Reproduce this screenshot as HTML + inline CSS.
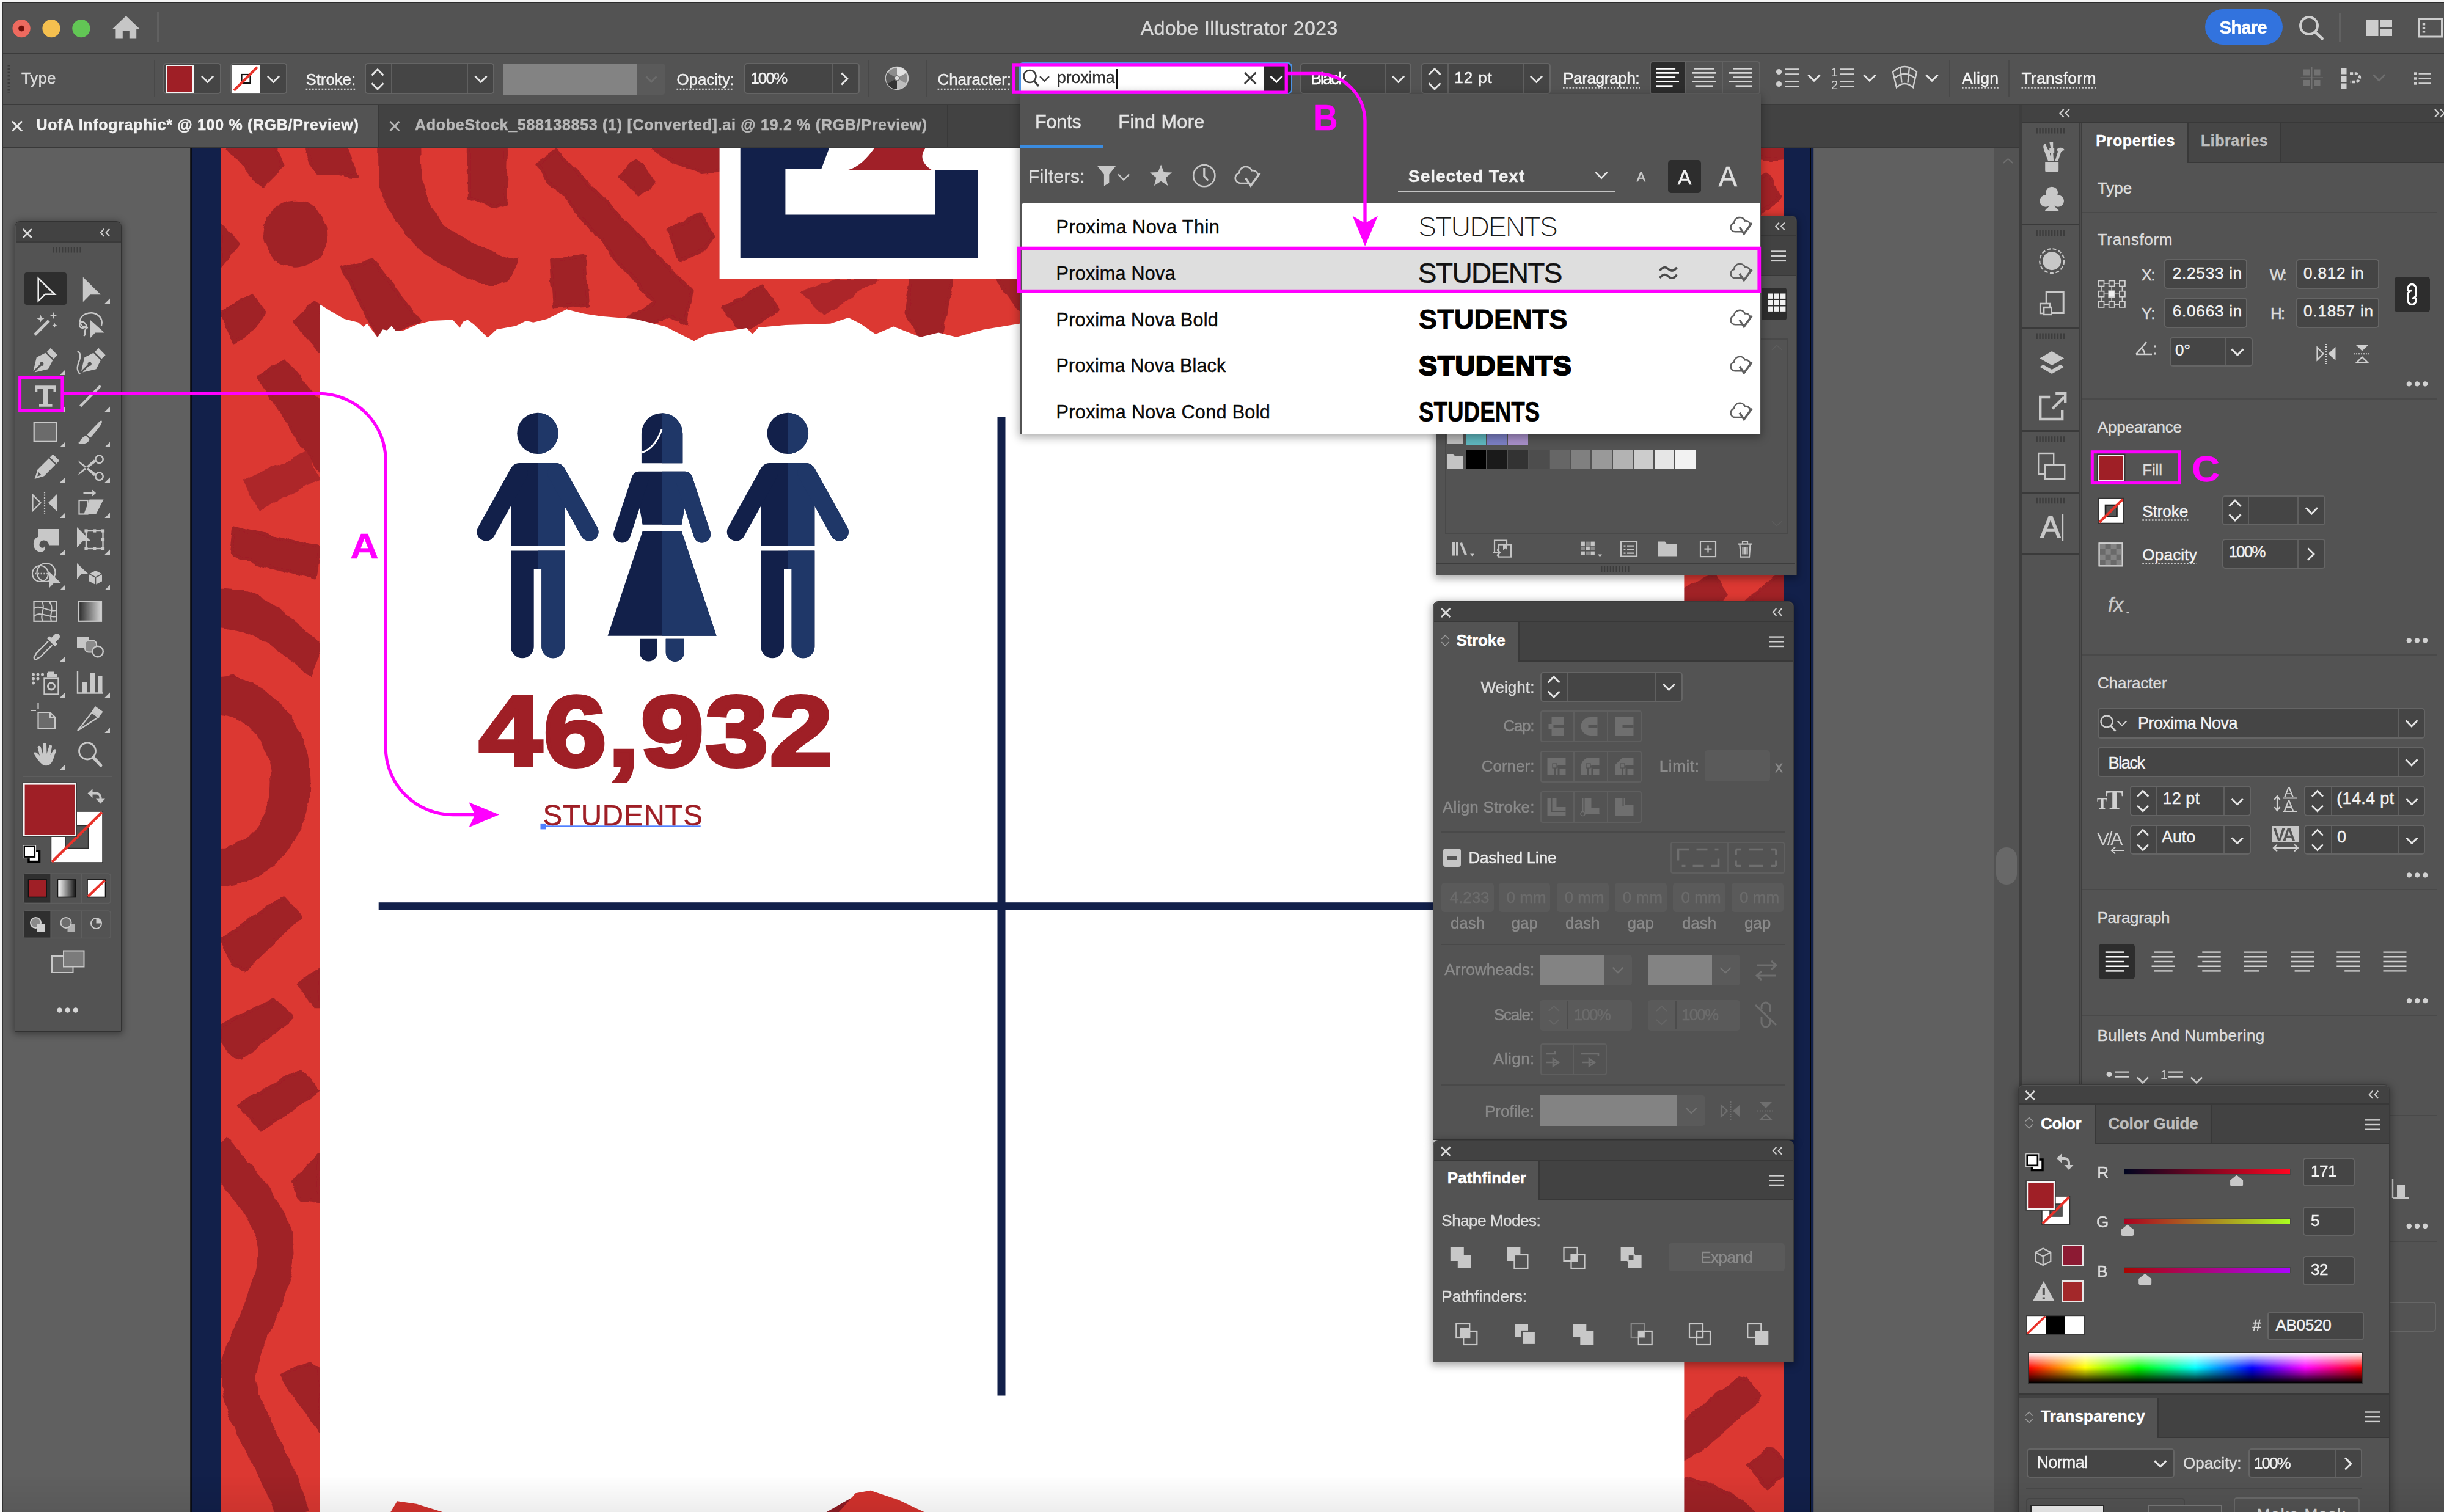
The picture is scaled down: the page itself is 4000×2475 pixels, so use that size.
<!-- g_head -->
<!DOCTYPE html>
<html lang="en"><head><meta charset="utf-8"><title>Adobe Illustrator 2023</title>
<style>
html,body{margin:0;padding:0}
body{width:4000px;height:2475px;overflow:hidden;background:#535353;position:relative;font-family:"Liberation Sans",sans-serif;color:#dcdcdc;font-size:25px;line-height:1}
.a{position:absolute}
.t{position:absolute;white-space:nowrap;line-height:1;-webkit-text-stroke-width:0.45px}
svg{overflow:visible}
</style></head><body>
<!-- g_canvas -->
<div class="a" style="left:0;top:242px;width:3304px;height:2233px;background:#606060;overflow:hidden">
<svg class="a" width="3304" height="2233" viewBox="0 242 3304 2233" style="left:0;top:0">
<defs><clipPath id="rh"><rect x="880" y="600" width="203.6" height="600"/><rect x="1083.600" y="600" width="205.700" height="600" transform="translate(0 0)"/></clipPath>
<clipPath id="rh1"><rect x="880" y="600" width="100" height="600"/></clipPath>
<clipPath id="rh2"><rect x="1083.600" y="600" width="100" height="600"/></clipPath>
<clipPath id="rh3"><rect x="1289.300" y="600" width="100" height="600"/></clipPath>
<filter id="rough" x="-5%" y="-5%" width="110%" height="110%"><feTurbulence type="fractalNoise" baseFrequency="0.035" numOctaves="3" seed="4" result="n"/><feDisplacementMap in="SourceGraphic" in2="n" scale="9" xChannelSelector="R" yChannelSelector="G"/></filter>
<clipPath id="redclip"><rect x="362" y="242" width="2557.500" height="2240"/></clipPath></defs>
<rect x="311.300" y="242" width="2652.700" height="2240" fill="#050505"/>
<rect x="313.700" y="242" width="2648.300" height="2240" fill="#12204a"/>
<rect x="2964" y="242" width="4.200" height="2240" fill="#12204a"/>
<rect x="362" y="242" width="2557.500" height="2240" fill="#dc3832"/>
<g fill="#a02028" clip-path="url(#redclip)"><g filter="url(#rough)"><g stroke="#a02028" stroke-width="5" stroke-linejoin="round">
<polygon points="371.6,242.0 451.8,242.0 463.2,271.5 430.3,304.4 408.8,283.0" />
<polygon points="501.9,242.0 566.4,242.0 583.5,289.3 552.0,284.4 520.5,284.4 509.0,268.6" />
<polygon points="768.3,242.0 828.4,242.0 827.0,334.5 812.7,338.8 768.3,323.0" />
<polygon points="878.0,269.5 910.0,244.9 1131.0,475.7 1123.6,529.7 1096.6,517.4 1040.0,540.0 1010.6,529.7 1069.6,495.3" />
<polygon points="1015.6,286.6 1040.1,262.1 1072.0,296.5 1045.0,321.0" />
<polygon points="1094.1,377.5 1148.1,348.0 1167.8,387.3 1153.0,409.4 1113.8,426.6" />
<polygon points="902.6,426.6 956.6,419.2 961.5,500.2 907.5,502.7" />
<polygon points="560.6,437.6 609.3,426.2 686.6,526.4 617.9,552.2" />
<polygon points="361.9,368.9 390.2,399.0 361.9,434.8" />
<polygon points="1069.6,242.0 1177.6,242.0 1177.6,279.1 1149.1,281.6 1100.0,266.8" />
<polygon points="1185.9,503.7 1247.3,468.1 1273.1,506.2 1230.1,535.6 1208.0,536.9" />
<polygon points="1490.3,457.1 1556.6,457.1 1541.9,546.7 1502.6,551.6 1483.0,512.3" />
<polygon points="1632.7,457.1 1669.6,457.1 1669.6,507.4" />
<polygon points="361.8,512.7 412.0,482.2 432.5,510.6 416.4,536.7 383.7,560.8" />
<polygon points="481.9,528.0 514.6,495.3 523.3,499.6 530.0,582.6" />
<polygon points="422.9,617.5 466.6,589.1 540.0,680.0 540.0,790.0 497.0,733.0" />
<polygon points="383.7,864.1 523.3,896.9 516.8,947.1 431.7,925.2 379.3,907.8" />
<polygon points="361.8,1108.6 381.5,1106.4 440.0,1150.0 361.8,1150.0" />
<polygon points="361.8,1536.5 464.4,1468.8 492.8,1499.4 398.9,1588.9 381.5,1580.2" />
<polygon points="488.4,1610.7 523.3,1584.5 523.3,1647.8 516.8,1647.8" />
<polygon points="361.8,1680.5 449.1,1634.7 479.7,1665.3 394.6,1732.9 381.5,1728.6 361.8,1702.4" />
<polygon points="389.5,1808.8 492.6,1751.6 522.4,1785.9 426.7,1850.0" />
<polygon points="478.3,1932.0 522.4,1889.0 522.4,1966.4 492.6,1963.5" />
<polygon points="461.1,2249.9 506.9,2232.7 522.4,2241.3 530.0,2350.0 492.6,2301.5" />
<polygon points="2756.4,2325.5 2845.5,2254.6 2858.3,2257.3 2880.1,2283.7 2874.6,2294.6 2778.2,2376.4 2756.4,2388.3" />
<polygon points="2860.1,2398.3 2892.8,2371.9 2900.1,2372.8 2919.5,2391.0 2919.5,2412.8 2892.8,2434.7 2887.4,2431.0" />
<polygon points="2756.4,2423.7 2761.8,2420.1 2801.9,2431.0 2838.2,2449.2 2871.0,2475.0 2756.4,2475.0" />
<polygon points="2756.5,965.9 2790.8,945.1 2805.6,940.0 2825.2,974.5 2815.4,984.1 2756.5,990.0" />
<polygon points="2855.9,984.1 2908.7,943.8 2919.5,938.0 2919.5,990.0" />
<polygon points="2870.0,240.0 2925.0,240.0 2925.0,257.0 2900.0,259.5 2870.0,257.0" />
<polygon points="2875.0,293.0 2890.6,285.0 2893.0,287.0 2913.0,322.2 2911.0,325.5 2875.0,352.0" />
</g>
<path d="M619.3 236.0C620.0 248.6 617.1 288.5 623.6 311.6C630.1 334.7 644.1 356.0 658.0 374.6C671.9 393.2 685.2 408.5 706.7 423.3C728.2 438.1 766.4 456.9 786.9 463.4C807.4 469.8 822.6 462.2 829.8 462.0L848.5 423.3C845.9 423.1 847.8 427.6 832.7 421.9C817.7 416.2 777.8 400.6 758.2 388.9C738.6 377.2 726.3 367.0 715.3 351.7C704.3 336.4 696.9 316.6 692.4 297.3C687.9 278.0 688.8 246.2 688.1 236.0Z" />
<path d="M355.0 962.3C363.4 963.4 387.6 962.7 405.5 968.9C423.4 975.1 441.4 984.7 462.2 999.4C482.9 1014.1 518.7 1047.4 530.0 1057.0L508.0 1107.0C498.2 1099.2 467.7 1072.6 449.1 1060.5C430.6 1048.4 412.4 1039.9 396.7 1034.4C381.0 1029.0 361.9 1028.9 355.0 1027.8Z" />
<ellipse cx="483.300" cy="383.200" rx="53" ry="54.500"/>
<polygon points="398.9,785.6 503.7,737.5 523.3,785.6 422.9,835.8" opacity="0.78"/>
<polygon points="1308.7,476.7 1367.6,457.1 1438.8,457.1 1348.0,516.0" opacity="0.8"/>
<ellipse cx="357.500" cy="1279" rx="118" ry="141" fill="none" stroke="#a02028" stroke-width="64"/>
<path d="M350 1880C420 1960 460 2010 450 2070C440 2140 390 2200 390 2255C392 2320 450 2380 478 2480" fill="none" stroke="#a02028" stroke-width="58"/>
</g></g>
<path fill="#fff" d="M524 2480V498.6L543.4 510.6L563.5 522L586.4 527.8L595 535L600.7 529.3L617.9 552.2L626.5 539.3L633.6 540.7L640.8 533.6L648 542L660.9 540.7L683.8 530.7L706.7 525L741 523.5L752.5 536.4L758.2 526.4L765.4 523.5L775.4 530.7L798.3 552.7L812.7 539.3L844.2 533.6L861.3 525L872.8 527.8L895.7 522.1L927.2 506.3L955.8 513.5L984.5 517.8L1040 522.3L1089 534.6L1135.8 558.2L1158 546.9L1221.8 537L1231.6 546.9L1241.4 536L1285.6 532.1L1359 529.7L1388.7 519.9L1408 529.7L1433 546.9L1462.4 534.6L1506.5 551.8L1536 544.4L1565.5 551.8L1609.7 539.5L1668.6 529.7L2756.400 530V2480Z"/>
<path fill="#8f1c24" d="M1351 2476L1394 2451.600L1433 2476Z"/><path fill="#d4322d" d="M638.700 2476L650 2457.200L681.600 2461.800L727.500 2476ZM1372 2476L1394 2451.600L1400 2444.300L1424.700 2439.700L1470 2455L1514.700 2476Z"/>
<rect x="1177.600" y="242" width="1200" height="214.400" fill="#fff"/>
<path fill="#12204a" d="M1211.700 242H1357.300L1344.300 276.600H1285.400V351.500H1530.900V278.600H1600.800V422.700H1211.700Z"/>
<path fill="#a02028" d="M1379.900 279.100Q1405 279 1431.400 242H1514.900Q1500 262 1526 279.100Z"/>
<rect x="619.700" y="1477.200" width="1760" height="12.800" fill="#12204a"/>
<rect x="1632.500" y="682" width="13" height="1602.500" fill="#12204a"/>
<g fill="#12204a" stroke="#12204a" stroke-width="0"><circle cx="880" cy="709.4" r="33.7"/><path d="M836 893V772a14 14 0 0 1 14 -14h60a14 14 0 0 1 14 14V893Z"/><line x1="849" y1="774" x2="795.5" y2="870.5" stroke-width="30" stroke-linecap="round"/><line x1="911" y1="774" x2="964.5" y2="870.5" stroke-width="30" stroke-linecap="round"/><path d="M836 901.5H924V1058.500a18.850 18.850 0 0 1 -37.700 0V931.600H873.7V1058.500a18.850 18.850 0 0 1 -37.700 0Z"/></g>
<g fill="#1f3768" stroke="#1f3768" stroke-width="0" clip-path="url(#rh1)"><circle cx="880" cy="709.4" r="33.7"/><path d="M836 893V772a14 14 0 0 1 14 -14h60a14 14 0 0 1 14 14V893Z"/><line x1="849" y1="774" x2="795.5" y2="870.5" stroke-width="30" stroke-linecap="round"/><line x1="911" y1="774" x2="964.5" y2="870.5" stroke-width="30" stroke-linecap="round"/><path d="M836 901.5H924V1058.500a18.850 18.850 0 0 1 -37.700 0V931.600H873.7V1058.500a18.850 18.850 0 0 1 -37.700 0Z"/></g>
<g fill="#12204a" stroke="#12204a" stroke-width="0"><path d="M1049.8999999999999 758.2V709.900A33.700 33.700 0 0 1 1117.3 709.900V758.200Z"/><path d="M1034.6 783a11.500 11.500 0 0 1 11.500 -11.300h75a11.500 11.500 0 0 1 11.500 11.300L1119.6 836L1115.6 858.700H1051.6L1047.6 836Z"/><line x1="1047.1" y1="786" x2="1018.0999999999999" y2="874.500" stroke-width="28" stroke-linecap="round"/><line x1="1120.1" y1="786" x2="1149.1" y2="874.500" stroke-width="28" stroke-linecap="round"/><path d="M1051.6 869.800H1115.6L1172.6 1040.700H994.5999999999999Z"/><path d="M1047.0 1045.800h29v22.200a14.500 14.500 0 0 1 -29 0Z M1089.6999999999998 1045.800h30v22.200a15 15 0 0 1 -30 0Z"/></g>
<g fill="#1f3768" stroke="#1f3768" stroke-width="0" clip-path="url(#rh2)"><path d="M1049.8999999999999 758.2V709.900A33.700 33.700 0 0 1 1117.3 709.900V758.200Z"/><path d="M1034.6 783a11.500 11.500 0 0 1 11.500 -11.300h75a11.500 11.500 0 0 1 11.500 11.300L1119.6 836L1115.6 858.700H1051.6L1047.6 836Z"/><line x1="1047.1" y1="786" x2="1018.0999999999999" y2="874.500" stroke-width="28" stroke-linecap="round"/><line x1="1120.1" y1="786" x2="1149.1" y2="874.500" stroke-width="28" stroke-linecap="round"/><path d="M1051.6 869.800H1115.6L1172.6 1040.700H994.5999999999999Z"/><path d="M1047.0 1045.800h29v22.200a14.500 14.500 0 0 1 -29 0Z M1089.6999999999998 1045.800h30v22.200a15 15 0 0 1 -30 0Z"/></g>
<g fill="#12204a" stroke="#12204a" stroke-width="0"><circle cx="1289.3" cy="709.4" r="33.7"/><path d="M1245.3 893V772a14 14 0 0 1 14 -14h60a14 14 0 0 1 14 14V893Z"/><line x1="1258.3" y1="774" x2="1204.8" y2="870.5" stroke-width="30" stroke-linecap="round"/><line x1="1320.3" y1="774" x2="1373.8" y2="870.5" stroke-width="30" stroke-linecap="round"/><path d="M1245.3 901.5H1333.3V1058.500a18.850 18.850 0 0 1 -37.700 0V931.600H1283.0V1058.500a18.850 18.850 0 0 1 -37.700 0Z"/></g>
<g fill="#1f3768" stroke="#1f3768" stroke-width="0" clip-path="url(#rh3)"><circle cx="1289.3" cy="709.4" r="33.7"/><path d="M1245.3 893V772a14 14 0 0 1 14 -14h60a14 14 0 0 1 14 14V893Z"/><line x1="1258.3" y1="774" x2="1204.8" y2="870.5" stroke-width="30" stroke-linecap="round"/><line x1="1320.3" y1="774" x2="1373.8" y2="870.5" stroke-width="30" stroke-linecap="round"/><path d="M1245.3 901.5H1333.3V1058.500a18.850 18.850 0 0 1 -37.700 0V931.600H1283.0V1058.500a18.850 18.850 0 0 1 -37.700 0Z"/></g>
<path d="M1050 741Q1072 734 1083 703" fill="none" stroke="#fff" stroke-width="3"/>
<rect x="888" y="1351.300" width="258.700" height="2.600" fill="#4f7fff"/><rect x="884.500" y="1347.900" width="9.400" height="9.500" fill="#4f7fff"/>
</svg>
<div class="t" style="left:783.9px;top:872.9px;font-size:163px;color:#9f1f26;font-weight:bold;-webkit-text-stroke:6px #9f1f26;transform-origin:0 0;transform:scaleX(1.138);letter-spacing:2px;">46,932</div>
<div class="t" style="left:888.5px;top:1068.6px;font-size:47.5px;color:#9f1f26;letter-spacing:0.79px;">STUDENTS</div>
</div>
<!-- g_tools -->
<div class="a" style="left:24.0px;top:361.7px;width:175.0px;height:1327.3px;background:#535353;border-radius:9px 9px 2px 2px;box-shadow:0 2px 12px 2px rgba(0,0,0,.36);border:1.5px solid #323232;box-sizing:border-box;"></div>
<div class="a" style="left:25.5px;top:363.2px;width:172.0px;height:31.8px;background:#424242;border-radius:8px 8px 0 0;"></div>
<div class="a" style="left:25.5px;top:394.5px;width:172.0px;height:2.0px;background:#3a3a3a;"></div>
<div class="a" style="left:40.1px;top:446.0px;width:68.8px;height:52.6px;background:#2e2e2e;border-radius:4px;"></div>
<div class="a" style="left:38.0px;top:1270.5px;width:145.0px;height:1.5px;background:#5e5e5e;"></div>
<svg class="a" style="left:0;top:0;" width="4000" height="2475" viewBox="0 0 4000 2475">
<path d="M37.8 374.9L51.8 388.9M51.8 374.9L37.8 388.9" stroke="#dadada" stroke-width="2.8"/><path d="M170.3 374.8L164.8 380.8L170.3 386.8" fill="none" stroke="#d0d0d0" stroke-width="2"/>
<path d="M179.2 374.8L173.7 380.8L179.2 386.8" fill="none" stroke="#d0d0d0" stroke-width="2"/>
<line x1="86.3" y1="408.7" x2="133.5" y2="408.7" stroke="#3c3c3c" stroke-width="9.5" stroke-dasharray="2.4 2.5"/>
<path d="M62.7 455.5V492.5L73.8 481.8H89.5Z" fill="none" stroke="#ececec" stroke-width="2.6"/><path d="M135.8 453.5V494.3L147.6 482.3H164.8Z" fill="#c8c8c8"/><path d="M180 497h-8.6l8.6 -8.6z" fill="#c8c8c8"/><path d="M57 548L80 525" stroke="#c8c8c8" stroke-width="5"/><path d="M66.5 515.5L68.18 519.82L72.5 521.5L68.18 523.18L66.5 527.5L64.82 523.18L60.5 521.5L64.82 519.82Z" fill="#c8c8c8"/><path d="M87.5 511.0L89.04 514.96L93.0 516.5L89.04 518.04L87.5 522.0L85.96 518.04L82.0 516.5L85.96 514.96Z" fill="#c8c8c8"/><path d="M89.5 528.5L90.62 531.38L93.5 532.5L90.62 533.62L89.5 536.5L88.38 533.62L85.5 532.5L88.38 531.38Z" fill="#c8c8c8"/><path d="M144 536C132 539 124 521 140 514C156 508 170 519 166 533M140 533a5 5 0 1 1 -6 -6c6 0 10 8 6 12c-3 4 2 8 -3 11" fill="none" stroke="#c8c8c8" stroke-width="2.4"/><path d="M148 524V553L156 544.5H171Z" fill="#c8c8c8"/>
<g transform="translate(71.5 592.5) rotate(45)"><path d="M-8 -24h16v9h-16z" fill="#c8c8c8"/><path d="M-8.5 -12.5h17l5 15.5l-12 19.5v-15a3.2 3.2 0 1 0 -3 0v15l-12 -19.5z" fill="#c8c8c8"/></g><path d="M106.5 614h-8.6l8.6 -8.6z" fill="#c8c8c8"/><g transform="translate(150 592.5) rotate(45)"><path d="M-8 -24h16v9h-16z" fill="#c8c8c8"/><path d="M-8.5 -12.5h17l5 15.5l-12 19.5v-15a3.2 3.2 0 1 0 -3 0v15l-12 -19.5z" fill="#c8c8c8"/></g><path d="M127 574.5C140 584.5 118 599.5 131 612.5" fill="none" stroke="#c8c8c8" stroke-width="2.4"/>
<path d="M57.3 631.3H91.3V641H87.5V636H78.4V661.5H85.5V665.7H64V661.5H70.8V636H61.3V641H57.3Z" fill="#c8c8c8"/><path d="M106.5 674h-8.6l8.6 -8.6z" fill="#c8c8c8"/><path d="M131.5 665L164.5 631.5" stroke="#c8c8c8" stroke-width="4"/><path d="M180 674h-8.6l8.6 -8.6z" fill="#c8c8c8"/>
<rect x="55.7" y="691.4" width="36.7" height="31.4" fill="#6b6b6b" stroke="#c8c8c8" stroke-width="2.2"/><path d="M106.5 732h-8.6l8.6 -8.6z" fill="#c8c8c8"/><path d="M166 688.5C169 690 165 698 148 716.5L142.5 711.5C160 693 164 688 166 688.5ZM141 713.5L146.5 718.5C145 727 134 728 128 725C133 723 132 715 141 713.5Z" fill="#c8c8c8"/><path d="M180 732h-8.6l8.6 -8.6z" fill="#c8c8c8"/>
<g transform="translate(75 765.7) rotate(45)"><path d="M-7.5 -24h15v7h-15z M-7.5 -14.5h15v26l-7.500 14.500l-7.500 -14.500z" fill="#c8c8c8"/><path d="M-3.2 13.500h6.400l-3.2 6.200z" fill="#535353"/></g><path d="M106.5 790h-8.6l8.6 -8.6z" fill="#c8c8c8"/><circle cx="162.5" cy="751.7" r="6.200" fill="none" stroke="#c8c8c8" stroke-width="2.6"/><circle cx="162.5" cy="779.7" r="6.200" fill="none" stroke="#c8c8c8" stroke-width="2.6"/><path d="M127.500 753.2L157 775.2L154 779.2L130 757.7Z M127.500 778.2L157 756.2L154 752.2L130 773.7Z" fill="#c8c8c8"/><path d="M180 790h-8.6l8.6 -8.6z" fill="#c8c8c8"/>
<path d="M53.5 810V836L66.5 823Z" fill="none" stroke="#c8c8c8" stroke-width="2.2"/><path d="M93.500 808.5V837.5L79 823Z" fill="#c8c8c8"/><line x1="73" y1="805" x2="73" y2="842" stroke="#c8c8c8" stroke-width="2.2" stroke-dasharray="2.2 2.2"/><path d="M106.5 848h-8.6l8.6 -8.6z" fill="#c8c8c8"/><rect x="129.500" y="819" width="14" height="22.500" fill="none" stroke="#c8c8c8" stroke-width="2.2"/><path d="M146.500 817.5H169.500L157 842H137Z" fill="#c8c8c8"/><path d="M136.500 807H155M150.500 802.5L155.500 807L150.500 811.5" fill="none" stroke="#c8c8c8" stroke-width="2.2"/><path d="M180 848h-8.6l8.6 -8.6z" fill="#c8c8c8"/>
<path d="M62.500 866H96V892.5H80C80 883 66 881 64.500 891C64 897 72 899 73 894C76 901 70 904 65 903.5C52 901 52 881 62.500 879Z" fill="#c8c8c8"/><path d="M106.5 908h-8.6l8.6 -8.6z" fill="#c8c8c8"/><path d="M126 863V896L135.500 886H149Z" fill="#c8c8c8"/><rect x="141" y="869" width="27.500" height="29" fill="none" stroke="#c8c8c8" stroke-width="2.4"/><rect x="138.4" y="866.4" width="5.2" height="5.2" fill="#c8c8c8"/><rect x="152.20000000000002" y="866.4" width="5.2" height="5.2" fill="#c8c8c8"/><rect x="165.9" y="866.4" width="5.2" height="5.2" fill="#c8c8c8"/><rect x="165.9" y="880.9" width="5.2" height="5.2" fill="#c8c8c8"/><rect x="165.9" y="895.4" width="5.2" height="5.2" fill="#c8c8c8"/><rect x="152.20000000000002" y="895.4" width="5.2" height="5.2" fill="#c8c8c8"/><rect x="138.4" y="895.4" width="5.2" height="5.2" fill="#c8c8c8"/><path d="M180 908h-8.6l8.6 -8.6z" fill="#c8c8c8"/>
<circle cx="66" cy="939" r="13" fill="none" stroke="#c8c8c8" stroke-width="2.2"/><circle cx="75.5" cy="937" r="15" fill="none" stroke="#c8c8c8" stroke-width="2.2"/><line x1="57" y1="939" x2="82" y2="939" stroke="#c8c8c8" stroke-width="2.4" stroke-dasharray="2.4 2.4"/><path d="M81 936.5V962L88 954.5H100Z" fill="#c8c8c8"/><path d="M106.5 966h-8.6l8.6 -8.6z" fill="#c8c8c8"/><path d="M126 922V948L133 940H145Z" fill="#c8c8c8"/><path d="M156.500 934L167 939.5V951.5L156.500 957L146 951.5V939.5Z" fill="#c8c8c8"/><path d="M146 939.5L156.500 945L167 939.5M156.500 945V957" stroke="#535353" stroke-width="1.600" fill="none"/><path d="M180 966h-8.6l8.6 -8.6z" fill="#c8c8c8"/>
<rect x="55.500" y="984.3" width="37" height="32.500" fill="none" stroke="#c8c8c8" stroke-width="2.2"/><path d="M55.500 995.8C66 988.8 80 1002.8 92.500 998.8M55.500 1008.8C68 998.8 80 1012.8 92.500 1008.8M68 984.3C76 994.8 64 1006.8 70 1016.8M80 984.3C90 994.8 80 1006.8 84 1016.8" fill="none" stroke="#c8c8c8" stroke-width="2"/><defs><linearGradient id="tg"><stop offset="0" stop-color="#2c2c2c"/><stop offset="1" stop-color="#d6d6d6"/></linearGradient></defs><rect x="129" y="984.3" width="37" height="32.500" fill="url(#tg)" stroke="#c8c8c8" stroke-width="2.2"/>
<g transform="translate(75 1060) rotate(45)"><path d="M-5 -25.500a5 5 0 0 1 10 0v8h4.500v5.500h-19v-5.500h4.500z" fill="#c8c8c8"/><path d="M-4.500 -10v26c0 3 1.500 4 1.500 7a3 3 0 0 0 6 0c0 -3 1.500 -4 1.500 -7v-26" fill="none" stroke="#c8c8c8" stroke-width="2.4"/></g><path d="M106.5 1083h-8.6l8.6 -8.6z" fill="#c8c8c8"/><rect x="126" y="1042" width="19" height="19" fill="#c8c8c8"/><rect x="139" y="1048.5" width="19" height="19" rx="6" fill="#8a8a8a" stroke="#c8c8c8" stroke-width="2"/><circle cx="160" cy="1066.5" r="8.800" fill="#535353" stroke="#c8c8c8" stroke-width="2.4"/>
<rect x="72.500" y="1110.5" width="23" height="26" fill="none" stroke="#c8c8c8" stroke-width="2.4"/><circle cx="84" cy="1123.5" r="5.500" fill="none" stroke="#c8c8c8" stroke-width="3"/><path d="M79 1099.5h10v4h4v5h-16v-7z" fill="#c8c8c8"/><circle cx="54.5" cy="1104" r="2.500" fill="#c8c8c8"/><circle cx="62" cy="1104" r="2.500" fill="#c8c8c8"/><circle cx="69.5" cy="1104" r="2.500" fill="#c8c8c8"/><circle cx="54.5" cy="1111" r="2.500" fill="#c8c8c8"/><circle cx="62" cy="1111" r="2.500" fill="#c8c8c8"/><circle cx="54.5" cy="1118" r="2.500" fill="#c8c8c8"/><path d="M106.5 1142h-8.6l8.6 -8.6z" fill="#c8c8c8"/><path d="M127 1099V1134.5H169" fill="none" stroke="#c8c8c8" stroke-width="2.4"/><path d="M135 1117h8v17h-8zM147.500 1102h8v32h-8zM160 1107h7.500v27h-7.500z" fill="#c8c8c8"/><path d="M180 1142h-8.6l8.6 -8.6z" fill="#c8c8c8"/>
<path d="M62.500 1166H82L90 1174V1192H62.500Z" fill="#6b6b6b" stroke="#c8c8c8" stroke-width="2.2"/><path d="M82 1166V1174H90" fill="none" stroke="#c8c8c8" stroke-width="2"/><path d="M50 1163H59M62.500 1151V1160" stroke="#c8c8c8" stroke-width="2.200"/><path d="M127 1196L150.500 1166L161 1174Z" fill="none" stroke="#c8c8c8" stroke-width="2.2"/><path d="M150 1164.5L156 1156L168.500 1165L162 1173.5Z" fill="#c8c8c8"/><path d="M180 1200h-8.6l8.6 -8.6z" fill="#c8c8c8"/>
<path d="M69 1251C62 1245 58 1238 55 1233C57 1230 61 1232 65 1237L61.5 1223C62 1220 66 1220 66.8 1223L70 1234L70.5 1218C71 1215 75.500 1215 76 1218L76.500 1234L80.500 1221C81.500 1218 85.500 1219 85 1222L82.500 1236L88 1227C90 1225 93 1227 92 1229C88 1239 87 1247 82 1251C79 1254 72 1254 69 1251Z" fill="#c8c8c8"/><path d="M106.5 1260h-8.6l8.6 -8.6z" fill="#c8c8c8"/><circle cx="143" cy="1229.5" r="13.500" fill="none" stroke="#c8c8c8" stroke-width="2.8"/><line x1="153" y1="1240" x2="165" y2="1253" stroke="#c8c8c8" stroke-width="5" stroke-linecap="round"/>
<rect x="83.500" y="1328" width="84.500" height="84" fill="#fff" stroke="#2e2e2e" stroke-width="1.5"/><rect x="107" y="1351.500" width="37.500" height="37" fill="#535353" stroke="#2e2e2e" stroke-width="1.5"/><line x1="85" y1="1411" x2="167" y2="1329.500" stroke="#e8322a" stroke-width="4.500"/><rect x="39.300" y="1283.300" width="84" height="84" fill="#9f1f26" stroke="#f4f4f4" stroke-width="2.600"/><rect x="37.300" y="1281.300" width="88" height="88" fill="none" stroke="#3a3a3a" stroke-width="1.400"/><path d="M149 1298.500h8.500a7 7 0 0 1 7 7v4.500" fill="none" stroke="#c8c8c8" stroke-width="4"/><path d="M143.500 1298.500l8 -7.500v15z M164.500 1315.500l-7.500 -8h15z" fill="#c8c8c8"/><rect x="47" y="1393" width="17.500" height="17.500" fill="#fff" stroke="#000" stroke-width="3.500"/><rect x="39.500" y="1385.500" width="17.500" height="17.500" fill="#fff" stroke="#000" stroke-width="3"/><rect x="38" y="1384" width="20.500" height="20.500" fill="none" stroke="#e0e0e0" stroke-width="1.200"/>
<rect x="39" y="1430" width="142" height="48.500" rx="4" fill="none" stroke="#5e5e5e" stroke-width="1.600"/><rect x="40" y="1431" width="42.500" height="46.500" fill="#2f2f2f"/><path d="M83.500 1430v48.500M133.500 1430v48.500" stroke="#5e5e5e" stroke-width="1.600"/><rect x="46.500" y="1440" width="29.500" height="28.500" fill="#9f1f26" stroke="#111" stroke-width="1.600"/><defs><linearGradient id="tg2"><stop offset="0" stop-color="#fff"/><stop offset="1" stop-color="#111"/></linearGradient></defs><rect x="94.500" y="1440" width="29.500" height="28.500" fill="url(#tg2)" stroke="#111" stroke-width="1.600"/><rect x="143" y="1440" width="29.500" height="28.500" fill="#fff" stroke="#111" stroke-width="1.600"/><line x1="144" y1="1467.500" x2="171.500" y2="1441" stroke="#e8322a" stroke-width="4"/>
<rect x="39" y="1491" width="142" height="44.500" rx="4" fill="none" stroke="#5e5e5e" stroke-width="1.600"/><rect x="40" y="1492" width="42.500" height="42.500" fill="#2f2f2f"/><path d="M83.500 1491v44.500M133.500 1491v44.500" stroke="#5e5e5e" stroke-width="1.600"/><circle cx="58.500" cy="1510.500" r="8.500" fill="#8a8a8a" stroke="#d0d0d0" stroke-width="2"/><rect x="60.500" y="1513" width="12.500" height="12" fill="#d0d0d0"/><rect x="110.500" y="1513" width="12.500" height="12" fill="#b0b0b0"/><circle cx="108" cy="1510.500" r="8.500" fill="#6d6d6d" stroke="#c8c8c8" stroke-width="2"/><circle cx="157.500" cy="1511.500" r="8.500" fill="none" stroke="#c8c8c8" stroke-width="2"/><path d="M157.500 1511.500h8.500a8.500 8.500 0 0 0 -8.500 -8.500z" fill="#c8c8c8"/>
<rect x="85" y="1565" width="34.500" height="27" fill="#6b6b6b" stroke="#c8c8c8" stroke-width="2"/><rect x="104" y="1556.500" width="33.500" height="26" fill="#7b7b7b" stroke="#c8c8c8" stroke-width="2"/><circle cx="97.500" cy="1653.500" r="4.200" fill="#d6d6d6"/><circle cx="110.600" cy="1653.500" r="4.200" fill="#d6d6d6"/><circle cx="123.700" cy="1653.500" r="4.200" fill="#d6d6d6"/>
</svg>
<!-- g_mid -->
<div class="a" style="left:2349.5px;top:352.5px;width:591.0px;height:589.0px;background:#535353;border-radius:9px 9px 0 0;box-shadow:0 3px 13px 2px rgba(0,0,0,.34);border:1.5px solid #3a3a3a;box-sizing:border-box;"></div>
<div class="a" style="left:2351.0px;top:354.0px;width:588.0px;height:31.0px;background:#424242;border-radius:8px 8px 0 0;"></div>
<div class="a" style="left:2351.0px;top:384.5px;width:588.0px;height:2.0px;background:#383838;"></div>
<div class="a" style="left:2351.0px;top:386.5px;width:588.0px;height:64.0px;background:#424242;"></div>
<div class="a" style="left:2351.0px;top:449.5px;width:588.0px;height:2.0px;background:#383838;"></div>
<div class="a" style="left:2351.0px;top:386.5px;width:300.0px;height:65.0px;background:#535353;"></div>
<div class="a" style="left:2651.0px;top:386.5px;width:2.0px;height:63.0px;background:#383838;"></div>
<div class="a" style="left:2365.2px;top:553.8px;width:560.6px;height:320.2px;background:#535353;border:2px solid #494949;border-radius:0px;box-sizing:border-box;"></div>
<div class="a" style="left:2884.0px;top:470.6px;width:40.0px;height:53.0px;background:#2d2d2d;border-radius:0 4px 4px 0;"></div>
<div class="a" style="left:2399.8px;top:735.9px;width:32.4px;height:32.4px;background:#000;"></div>
<div class="a" style="left:2434.1px;top:735.9px;width:32.4px;height:32.4px;background:#1a1a1a;"></div>
<div class="a" style="left:2468.3px;top:735.9px;width:32.4px;height:32.4px;background:#333;"></div>
<div class="a" style="left:2502.6px;top:735.9px;width:32.4px;height:32.4px;background:#4d4d4d;"></div>
<div class="a" style="left:2536.8px;top:735.9px;width:32.4px;height:32.4px;background:#666;"></div>
<div class="a" style="left:2571.1px;top:735.9px;width:32.4px;height:32.4px;background:#808080;"></div>
<div class="a" style="left:2605.3px;top:735.9px;width:32.4px;height:32.4px;background:#999;"></div>
<div class="a" style="left:2639.6px;top:735.9px;width:32.4px;height:32.4px;background:#b3b3b3;"></div>
<div class="a" style="left:2673.8px;top:735.9px;width:32.4px;height:32.4px;background:#ccc;"></div>
<div class="a" style="left:2708.1px;top:735.9px;width:32.4px;height:32.4px;background:#e6e6e6;"></div>
<div class="a" style="left:2742.3px;top:735.9px;width:32.4px;height:32.4px;background:#f2f2f2;"></div>
<div class="a" style="left:2399.8px;top:697.0px;width:32.4px;height:32.4px;background:#5fb7bf;"></div>
<div class="a" style="left:2434.1px;top:697.0px;width:32.4px;height:32.4px;background:#7b7fc4;"></div>
<div class="a" style="left:2468.3px;top:697.0px;width:32.4px;height:32.4px;background:#a78fc9;"></div>
<div class="a" style="left:2351.0px;top:921.5px;width:587.0px;height:2.0px;background:#3d3d3d;"></div>
<svg class="a" style="left:0;top:0;" width="4000" height="2475" viewBox="0 0 4000 2475">
<path d="M2363.5 364.2L2377.9 378.6M2377.9 364.2L2363.5 378.6" stroke="#dadada" stroke-width="2.8"/><path d="M2911.8 364.5L2906.3 370.5L2911.8 376.5" fill="none" stroke="#d0d0d0" stroke-width="2"/>
<path d="M2920.7 364.5L2915.2 370.5L2920.7 376.5" fill="none" stroke="#d0d0d0" stroke-width="2"/>
<line x1="2899" y1="411.5" x2="2923" y2="411.5" stroke="#d0d0d0" stroke-width="2.4"/><line x1="2899" y1="419.2" x2="2923" y2="419.2" stroke="#d0d0d0" stroke-width="2.4"/><line x1="2899" y1="426.9" x2="2923" y2="426.9" stroke="#d0d0d0" stroke-width="2.4"/><rect x="2893.0" y="480.5" width="8.4" height="8.4" fill="#f0f0f0"/><rect x="2893.0" y="491.0" width="8.4" height="8.4" fill="#f0f0f0"/><rect x="2893.0" y="501.5" width="8.4" height="8.4" fill="#f0f0f0"/><rect x="2903.5" y="480.5" width="8.4" height="8.4" fill="#f0f0f0"/><rect x="2903.5" y="491.0" width="8.4" height="8.4" fill="#f0f0f0"/><rect x="2903.5" y="501.5" width="8.4" height="8.4" fill="#f0f0f0"/><rect x="2914.0" y="480.5" width="8.4" height="8.4" fill="#f0f0f0"/><rect x="2914.0" y="491.0" width="8.4" height="8.4" fill="#f0f0f0"/><rect x="2914.0" y="501.5" width="8.4" height="8.4" fill="#f0f0f0"/><path d="M2900.0 572.5L2908.0 565.5L2916.0 572.5" fill="none" stroke="#5e5e5e" stroke-width="1.6"/>
<path d="M2900.0 853.5L2908.0 860.5L2916.0 853.5" fill="none" stroke="#5e5e5e" stroke-width="1.6"/>
<path d="M2368.5 743h10l3 4h13.500v21h-26.500z" fill="#c4c4c4"/><rect x="2368.500" y="700" width="26.500" height="26" fill="#bdbdbd"/><path d="M2379 887.6v22M2385 887.6v22" stroke="#c4c4c4" stroke-width="4"/><path d="M2391 888.6l8 20" stroke="#c4c4c4" stroke-width="4"/><path d="M2406 906.6h7l-3.500 4z" fill="#c4c4c4"/><rect x="2446" y="884.6" width="20" height="20" fill="none" stroke="#c4c4c4" stroke-width="2.2"/><rect x="2453" y="891.6" width="20" height="20" fill="#535353" stroke="#c4c4c4" stroke-width="2.2"/><path d="M2443 904.6h12m-5 -5l5 5l-5 5" fill="none" stroke="#c4c4c4" stroke-width="2.2"/><path d="M2460 891.6h7v9l-3.500 -3l-3.500 3z" fill="#c4c4c4"/><rect x="2587.5" y="886.6" width="6.4" height="6.4" fill="#c4c4c4"/><rect x="2587.5" y="894.6" width="6.4" height="6.4" fill="#8a8a8a"/><rect x="2587.5" y="902.6" width="6.4" height="6.4" fill="#c4c4c4"/><rect x="2595.5" y="886.6" width="6.4" height="6.4" fill="#8a8a8a"/><rect x="2595.5" y="894.6" width="6.4" height="6.4" fill="#c4c4c4"/><rect x="2595.5" y="902.6" width="6.4" height="6.4" fill="#8a8a8a"/><rect x="2603.5" y="886.6" width="6.4" height="6.4" fill="#c4c4c4"/><rect x="2603.5" y="894.6" width="6.4" height="6.4" fill="#8a8a8a"/><rect x="2603.5" y="902.6" width="6.4" height="6.4" fill="#c4c4c4"/><path d="M2615 907.6h7l-3.500 4z" fill="#c4c4c4"/><rect x="2653" y="886.6" width="26" height="24" fill="none" stroke="#c4c4c4" stroke-width="2.200"/><path d="M2657.500 893.6h3M2663 893.6h12" stroke="#c4c4c4" stroke-width="2.200"/><path d="M2657.500 899.6h3M2663 899.6h12" stroke="#c4c4c4" stroke-width="2.200"/><path d="M2657.500 905.6h3M2663 905.6h12" stroke="#c4c4c4" stroke-width="2.200"/><path d="M2714 886.6h11l3 4h17v20h-31z" fill="#c4c4c4"/><rect x="2783" y="886.1" width="25" height="25" fill="none" stroke="#c4c4c4" stroke-width="2.200"/><path d="M2795.500 892.6v12M2789.500 898.6h12" stroke="#c4c4c4" stroke-width="2.200"/><path d="M2845 890.6h22M2852 890.6v-4h8v4M2847.500 891.6l1.500 20h14l1.500 -20M2852.500 895.6v12M2856 895.6v12M2859.500 895.6v12" fill="none" stroke="#c4c4c4" stroke-width="2.200"/><line x1="2620" y1="931.5" x2="2668" y2="931.5" stroke="#3c3c3c" stroke-width="9" stroke-dasharray="2.400 2.500"/>
</svg>
<div class="a" style="left:2345.0px;top:984.0px;width:591.0px;height:882.0px;background:#535353;border-radius:9px 9px 0 0;box-shadow:0 3px 13px 2px rgba(0,0,0,.34);border:1.5px solid #3a3a3a;box-sizing:border-box;"></div>
<div class="a" style="left:2346.5px;top:985.5px;width:588.0px;height:31.0px;background:#424242;border-radius:8px 8px 0 0;"></div>
<div class="a" style="left:2346.5px;top:1016.0px;width:588.0px;height:2.0px;background:#383838;"></div>
<div class="a" style="left:2346.5px;top:1018.0px;width:588.0px;height:64.0px;background:#424242;"></div>
<div class="a" style="left:2346.5px;top:1081.0px;width:588.0px;height:2.0px;background:#383838;"></div>
<div class="a" style="left:2346.5px;top:1018.0px;width:138.0px;height:65.0px;background:#535353;"></div>
<div class="a" style="left:2484.5px;top:1018.0px;width:2.0px;height:63.0px;background:#383838;"></div>
<div class="t" style="left:2383.4px;top:1035.0px;font-size:26px;color:#ffffff;letter-spacing:-0.14px;font-weight:bold;">Stroke</div>
<div class="t" style="left:2423.4px;top:1112.4px;font-size:26px;color:#dcdcdc;letter-spacing:0.05px;">Weight:</div>
<div class="t" style="left:2460.3px;top:1175.4px;font-size:26px;color:#8b8b8b;letter-spacing:-1.27px;">Cap:</div>
<div class="t" style="left:2424.7px;top:1241.4px;font-size:26px;color:#8b8b8b;letter-spacing:0.00px;">Corner:</div>
<div class="t" style="left:2715.7px;top:1241.4px;font-size:26px;color:#8b8b8b;letter-spacing:0.64px;">Limit:</div>
<div class="t" style="left:2905.0px;top:1242.0px;font-size:26px;color:#8b8b8b;">x</div>
<div class="t" style="left:2361.0px;top:1307.8px;font-size:26px;color:#8b8b8b;letter-spacing:0.25px;">Align Stroke:</div>
<div class="a" style="left:2521.0px;top:1099.6px;width:233.4px;height:49.6px;background:#454545;border:2px solid #656565;border-radius:5px;box-sizing:border-box;"></div>
<div class="a" style="left:2564.3px;top:1101.6px;width:2.0px;height:45.6px;background:#5f5f5f;"></div>
<div class="a" style="left:2708.8px;top:1101.6px;width:2.0px;height:45.6px;background:#5f5f5f;"></div>
<div class="a" style="left:2521.0px;top:1162.8px;width:165.6px;height:52.2px;background:#535353;border:2px solid #5f5f5f;border-radius:4px;box-sizing:border-box;"></div>
<div class="a" style="left:2575.2px;top:1164.8px;width:2.0px;height:48.2px;background:#5f5f5f;"></div>
<div class="a" style="left:2630.4px;top:1164.8px;width:2.0px;height:48.2px;background:#5f5f5f;"></div>
<div class="a" style="left:2521.0px;top:1229.0px;width:165.6px;height:51.7px;background:#535353;border:2px solid #5f5f5f;border-radius:4px;box-sizing:border-box;"></div>
<div class="a" style="left:2575.2px;top:1231.0px;width:2.0px;height:47.7px;background:#5f5f5f;"></div>
<div class="a" style="left:2630.4px;top:1231.0px;width:2.0px;height:47.7px;background:#5f5f5f;"></div>
<div class="a" style="left:2521.0px;top:1295.0px;width:165.6px;height:51.5px;background:#535353;border:2px solid #5f5f5f;border-radius:4px;box-sizing:border-box;"></div>
<div class="a" style="left:2575.2px;top:1297.0px;width:2.0px;height:47.5px;background:#5f5f5f;"></div>
<div class="a" style="left:2630.4px;top:1297.0px;width:2.0px;height:47.5px;background:#5f5f5f;"></div>
<div class="a" style="left:2789.8px;top:1228.4px;width:107.2px;height:50.6px;background:#5a5a5a;border-radius:5px;"></div>
<div class="a" style="left:2359.0px;top:1361.4px;width:562.0px;height:2.0px;background:#494949;"></div>
<div class="a" style="left:2361.6px;top:1389.4px;width:29.2px;height:29.2px;background:#c6c6c6;border-radius:4px;"></div>
<div class="a" style="left:2368.5px;top:1401.5px;width:15.5px;height:5.5px;background:#555;"></div>
<div class="t" style="left:2403.4px;top:1391.0px;font-size:26px;color:#eaeaea;letter-spacing:-0.20px;">Dashed Line</div>
<div class="a" style="left:2733.9px;top:1378.0px;width:187.4px;height:52.0px;background:#535353;border:2px solid #5f5f5f;border-radius:4px;box-sizing:border-box;"></div>
<div class="a" style="left:2826.6px;top:1380.0px;width:2.0px;height:48.0px;background:#5f5f5f;"></div>
<div class="a" style="left:2359.3px;top:1444.7px;width:85.5px;height:48.1px;background:#5a5a5a;border-radius:5px;"></div>
<div class="t" style="left:2372.5px;top:1456.0px;font-size:26px;color:#6c6c6c;">4.233</div>
<div class="t" style="left:2373.9px;top:1497.7px;font-size:26px;color:#8b8b8b;">dash</div>
<div class="a" style="left:2452.9px;top:1444.7px;width:84.5px;height:48.1px;background:#5a5a5a;border-radius:5px;"></div>
<div class="t" style="left:2465.6px;top:1456.0px;font-size:26px;color:#6c6c6c;">0 mm</div>
<div class="t" style="left:2473.5px;top:1497.7px;font-size:26px;color:#8b8b8b;">gap</div>
<div class="a" style="left:2547.7px;top:1444.7px;width:85.0px;height:48.1px;background:#5a5a5a;border-radius:5px;"></div>
<div class="t" style="left:2560.7px;top:1456.0px;font-size:26px;color:#6c6c6c;">0 mm</div>
<div class="t" style="left:2562.0px;top:1497.7px;font-size:26px;color:#8b8b8b;">dash</div>
<div class="a" style="left:2642.6px;top:1444.7px;width:85.4px;height:48.1px;background:#5a5a5a;border-radius:5px;"></div>
<div class="t" style="left:2655.8px;top:1456.0px;font-size:26px;color:#6c6c6c;">0 mm</div>
<div class="t" style="left:2663.6px;top:1497.7px;font-size:26px;color:#8b8b8b;">gap</div>
<div class="a" style="left:2738.4px;top:1444.7px;width:85.4px;height:48.1px;background:#5a5a5a;border-radius:5px;"></div>
<div class="t" style="left:2751.6px;top:1456.0px;font-size:26px;color:#6c6c6c;">0 mm</div>
<div class="t" style="left:2752.9px;top:1497.7px;font-size:26px;color:#8b8b8b;">dash</div>
<div class="a" style="left:2833.7px;top:1444.7px;width:85.8px;height:48.1px;background:#5a5a5a;border-radius:5px;"></div>
<div class="t" style="left:2847.1px;top:1456.0px;font-size:26px;color:#6c6c6c;">0 mm</div>
<div class="t" style="left:2854.9px;top:1497.7px;font-size:26px;color:#8b8b8b;">gap</div>
<div class="a" style="left:2359.0px;top:1544.8px;width:562.0px;height:2.0px;background:#494949;"></div>
<div class="t" style="left:2364.3px;top:1574.0px;font-size:26px;color:#8b8b8b;letter-spacing:0.10px;">Arrowheads:</div>
<div class="a" style="left:2520.3px;top:1563.4px;width:151.0px;height:50.0px;background:#5a5a5a;border-radius:5px;"></div>
<div class="a" style="left:2520.3px;top:1563.4px;width:105.0px;height:50.0px;background:#838383;"></div>
<div class="a" style="left:2696.5px;top:1563.4px;width:151.0px;height:50.0px;background:#5a5a5a;border-radius:5px;"></div>
<div class="a" style="left:2696.5px;top:1563.4px;width:105.0px;height:50.0px;background:#838383;"></div>
<div class="t" style="left:2445.0px;top:1648.0px;font-size:26px;color:#8b8b8b;letter-spacing:-1.25px;">Scale:</div>
<div class="a" style="left:2520.3px;top:1637.0px;width:151.0px;height:50.0px;background:#5a5a5a;border-radius:5px;"></div>
<div class="a" style="left:2565.3px;top:1639.0px;width:2.0px;height:46.0px;background:#4c4c4c;"></div>
<div class="t" style="left:2575.8px;top:1647.5px;font-size:26px;color:#6c6c6c;letter-spacing:-1.83px;">100%</div>
<div class="a" style="left:2696.5px;top:1637.0px;width:151.0px;height:50.0px;background:#5a5a5a;border-radius:5px;"></div>
<div class="a" style="left:2741.5px;top:1639.0px;width:2.0px;height:46.0px;background:#4c4c4c;"></div>
<div class="t" style="left:2752.0px;top:1647.5px;font-size:26px;color:#6c6c6c;letter-spacing:-1.83px;">100%</div>
<div class="t" style="left:2443.9px;top:1720.0px;font-size:26px;color:#8b8b8b;letter-spacing:0.47px;">Align:</div>
<div class="a" style="left:2521.0px;top:1708.4px;width:108.6px;height:51.6px;background:#535353;border:2px solid #5f5f5f;border-radius:4px;box-sizing:border-box;"></div>
<div class="a" style="left:2574.3px;top:1710.4px;width:2.0px;height:47.6px;background:#5f5f5f;"></div>
<div class="a" style="left:2359.0px;top:1774.8px;width:562.0px;height:2.0px;background:#494949;"></div>
<div class="t" style="left:2430.0px;top:1805.5px;font-size:26px;color:#8b8b8b;letter-spacing:0.01px;">Profile:</div>
<div class="a" style="left:2520.3px;top:1793.0px;width:271.0px;height:50.0px;background:#5a5a5a;border-radius:5px;"></div>
<div class="a" style="left:2520.3px;top:1793.0px;width:225.0px;height:50.0px;background:#838383;"></div>
<svg class="a" style="left:0;top:0;" width="4000" height="2475" viewBox="0 0 4000 2475">
<path d="M2359 995.7L2373.4 1010.1M2373.4 995.7L2359 1010.1" stroke="#dadada" stroke-width="2.8"/><path d="M2907.3 996.0L2901.8 1002.0L2907.3 1008.0" fill="none" stroke="#d0d0d0" stroke-width="2"/>
<path d="M2916.2 996.0L2910.7 1002.0L2916.2 1008.0" fill="none" stroke="#d0d0d0" stroke-width="2"/>
<line x1="2895" y1="1042.6" x2="2919" y2="1042.6" stroke="#d0d0d0" stroke-width="2.4"/><line x1="2895" y1="1050.3" x2="2919" y2="1050.3" stroke="#d0d0d0" stroke-width="2.4"/><line x1="2895" y1="1058.0" x2="2919" y2="1058.0" stroke="#d0d0d0" stroke-width="2.4"/><path d="M2359.3 1046.0L2365.3 1040.0L2371.3 1046.0" fill="none" stroke="#9a9a9a" stroke-width="1.6"/>
<path d="M2359.3 1051.0L2365.3 1057.0L2371.3 1051.0" fill="none" stroke="#9a9a9a" stroke-width="1.6"/>
<path d="M2533.5 1117.2L2543.0 1107.8L2552.5 1117.2" fill="none" stroke="#e6e6e6" stroke-width="3"/>
<path d="M2533.5 1131.8L2543.0 1141.2L2552.5 1131.8" fill="none" stroke="#e6e6e6" stroke-width="3"/>
<path d="M2722.0 1119.8L2731.5 1129.2L2741.0 1119.8" fill="none" stroke="#e6e6e6" stroke-width="3"/>
<path d="M2539.5 1174h20v30h-20v-11h-5v-8h5z" fill="#6f6f6f"/><path d="M2542.5 1189h17" stroke="#535353" stroke-width="4"/><path d="M2614.5 1174v30h-12a15 15 0 0 1 0 -30z" fill="#6f6f6f"/><path d="M2599.5 1189h15" stroke="#535353" stroke-width="4"/><path d="M2643.5 1174h30v30h-30z" fill="#6f6f6f"/><path d="M2655.5 1189h18" stroke="#535353" stroke-width="4"/><path d="M2532.5 1240h30v13h-13v16h-17z" fill="#6f6f6f"/><path d="M2544.5 1269v-14h18" fill="none" stroke="#535353" stroke-width="3"/><rect x="2541.0" y="1250" width="7" height="7" fill="#6f6f6f" stroke="#535353" stroke-width="1.2"/><path d="M2552.5 1258h10v11h-10z" fill="#6f6f6f"/><path d="M2587.5 1269v-14a15 15 0 0 1 15 -15h15v13h-13v16z" fill="#6f6f6f"/><path d="M2599.5 1269v-14h18" fill="none" stroke="#535353" stroke-width="3"/><rect x="2596.0" y="1250" width="7" height="7" fill="#6f6f6f" stroke="#535353" stroke-width="1.2"/><path d="M2607.5 1258h10v11h-10z" fill="#6f6f6f"/><path d="M2643.5 1269v-17l12 -12h18v13h-13v16z" fill="#6f6f6f"/><path d="M2655.5 1269v-14h18" fill="none" stroke="#535353" stroke-width="3"/><rect x="2652.0" y="1250" width="7" height="7" fill="#6f6f6f" stroke="#535353" stroke-width="1.2"/><path d="M2663.5 1258h10v11h-10z" fill="#6f6f6f"/><path d="M2532.5 1306h15v15h15v15h-30z" fill="#6f6f6f"/><path d="M2539.5 1306v22h23" fill="none" stroke="#535353" stroke-width="2"/><path d="M2593.5 1306h11v17h13v9h-24z" fill="#6f6f6f"/><path d="M2590.5 1306v26h27" fill="none" stroke="#6f6f6f" stroke-width="2"/><circle cx="2590.5" cy="1332" r="3.5" fill="#535353" stroke="#6f6f6f" stroke-width="1.6"/><path d="M2643.5 1306h12v13h18v17h-30z" fill="#6f6f6f"/><path d="M2658.5 1306v12h15" fill="none" stroke="#6f6f6f" stroke-width="2"/><path d="M2746.5 1390.5h66v27h-66z" fill="none" stroke="#6f6f6f" stroke-width="3.6" stroke-dasharray="18 12 18 12 6 15 6 0 18 12 18 12 6 15 6 0"/><path d="M2841 1390.5h66v27h-66z" fill="none" stroke="#6f6f6f" stroke-width="3.6" stroke-dasharray="9 12 24 12 9 0 9 9 9 0" /><path d="M2639.5 1583.8L2648.0 1592.2L2656.5 1583.8" fill="none" stroke="#747474" stroke-width="2.2"/>
<path d="M2815.5 1583.8L2824.0 1592.2L2832.5 1583.8" fill="none" stroke="#747474" stroke-width="2.2"/>
<path d="M2759.5 1813.8L2768.0 1822.2L2776.5 1813.8" fill="none" stroke="#747474" stroke-width="2.2"/>
<path d="M2875 1580h32m-8 -7l8 7l-8 7M2907 1597h-32m8 -7l-8 7l8 7" fill="none" stroke="#6f6f6f" stroke-width="3"/><path d="M2534.8 1655.0L2543.3 1647.0L2551.8 1655.0" fill="none" stroke="#666" stroke-width="2"/>
<path d="M2534.8 1669.0L2543.3 1677.0L2551.8 1669.0" fill="none" stroke="#666" stroke-width="2"/>
<path d="M2711.0 1655.0L2719.5 1647.0L2728.0 1655.0" fill="none" stroke="#666" stroke-width="2"/>
<path d="M2711.0 1669.0L2719.5 1677.0L2728.0 1669.0" fill="none" stroke="#666" stroke-width="2"/>
<path d="M2883 1651v-3a7 7 0 0 1 14 0v8M2897 1668v6a7 7 0 0 1 -14 0v-9M2873 1645l34 33" fill="none" stroke="#6f6f6f" stroke-width="3"/><path d="M2531 1725h14v-4M2531 1739h18m-7 -6l9 6l-9 6z" fill="none" stroke="#6f6f6f" stroke-width="2.600"/><path d="M2588 1725h28v4M2590 1739h18m-7 -6l9 6l-9 6z" fill="none" stroke="#6f6f6f" stroke-width="2.600"/><path d="M2817 1809v19l10 -9.500z" fill="none" stroke="#6f6f6f" stroke-width="2.200"/><path d="M2848 1808v21l-12 -10.500z" fill="#6f6f6f"/><path d="M2832.500 1803v32" stroke="#6f6f6f" stroke-width="2" stroke-dasharray="2 2"/><path d="M2880 1804h20l-10 10z" fill="#6f6f6f"/><path d="M2881 1833h18l-9 -9z" fill="none" stroke="#6f6f6f" stroke-width="2.200"/><path d="M2876 1818.500h28" stroke="#6f6f6f" stroke-width="2" stroke-dasharray="2 2"/>
</svg>
<div class="a" style="left:2345.0px;top:1865.7px;width:591.0px;height:364.3px;background:#535353;border-radius:9px 9px 0 0;box-shadow:0 3px 13px 2px rgba(0,0,0,.34);border:1.5px solid #3a3a3a;box-sizing:border-box;"></div>
<div class="a" style="left:2346.5px;top:1867.2px;width:588.0px;height:31.0px;background:#424242;border-radius:8px 8px 0 0;"></div>
<div class="a" style="left:2346.5px;top:1897.7px;width:588.0px;height:2.0px;background:#383838;"></div>
<div class="a" style="left:2346.5px;top:1899.7px;width:588.0px;height:64.0px;background:#424242;"></div>
<div class="a" style="left:2346.5px;top:1962.7px;width:588.0px;height:2.0px;background:#383838;"></div>
<div class="a" style="left:2346.5px;top:1899.7px;width:171.5px;height:65.0px;background:#535353;"></div>
<div class="a" style="left:2518.0px;top:1899.7px;width:2.0px;height:63.0px;background:#383838;"></div>
<div class="t" style="left:2368.8px;top:1914.8px;font-size:26px;color:#ffffff;letter-spacing:0.05px;font-weight:bold;">Pathfinder</div>
<div class="t" style="left:2359.3px;top:1984.5px;font-size:26px;color:#dcdcdc;letter-spacing:-0.48px;">Shape Modes:</div>
<div class="t" style="left:2359.3px;top:2109.0px;font-size:26px;color:#dcdcdc;letter-spacing:0.09px;">Pathfinders:</div>
<div class="a" style="left:2730.7px;top:2035.2px;width:190.6px;height:45.4px;background:#5a5a5a;border-radius:5px;"></div>
<div class="t" style="left:2783.3px;top:2045.0px;font-size:26px;color:#8b8b8b;letter-spacing:-0.56px;">Expand</div>
<svg class="a" style="left:0;top:0;" width="4000" height="2475" viewBox="0 0 4000 2475">
<path d="M2359 1877.4L2373.4 1891.8M2373.4 1877.4L2359 1891.8" stroke="#dadada" stroke-width="2.8"/><path d="M2907.3 1877.7L2901.8 1883.7L2907.3 1889.7" fill="none" stroke="#d0d0d0" stroke-width="2"/>
<path d="M2916.2 1877.7L2910.7 1883.7L2916.2 1889.7" fill="none" stroke="#d0d0d0" stroke-width="2"/>
<line x1="2895" y1="1924.5" x2="2919" y2="1924.5" stroke="#d0d0d0" stroke-width="2.4"/><line x1="2895" y1="1932.2" x2="2919" y2="1932.2" stroke="#d0d0d0" stroke-width="2.4"/><line x1="2895" y1="1939.9" x2="2919" y2="1939.9" stroke="#d0d0d0" stroke-width="2.4"/><rect x="2373.8" y="2042" width="22" height="22" fill="#c8c8c8"/><rect x="2385.8" y="2054" width="22" height="22" fill="#c8c8c8"/><rect x="2466.4" y="2042" width="22" height="22" fill="#c8c8c8"/><rect x="2478.4" y="2054" width="22" height="22" fill="#535353" stroke="#c8c8c8" stroke-width="2.2"/><rect x="2559.5" y="2042" width="22" height="22" fill="none" stroke="#c8c8c8" stroke-width="2.2"/><rect x="2571.5" y="2054" width="22" height="22" fill="none" stroke="#c8c8c8" stroke-width="2.2"/><rect x="2571.5" y="2054" width="10" height="10" fill="#c8c8c8"/><rect x="2652.6" y="2042" width="22" height="22" fill="#c8c8c8"/><rect x="2664.6" y="2054" width="22" height="22" fill="#c8c8c8"/><rect x="2664.6" y="2054" width="10" height="10" fill="#535353" stroke="#c8c8c8" stroke-width="2.2"/><rect x="2383.3" y="2167" width="22" height="22" fill="none" stroke="#c8c8c8" stroke-width="2.2"/><rect x="2389.3" y="2173" width="16" height="16" fill="#c8c8c8"/><rect x="2395.3" y="2179" width="22" height="22" fill="none" stroke="#c8c8c8" stroke-width="2.2"/><rect x="2479" y="2167" width="22" height="22" fill="#c8c8c8"/><rect x="2491" y="2179" width="22" height="22" fill="#c8c8c8" stroke="#535353" stroke-width="2.2"/><rect x="2574.3" y="2167" width="22" height="22" fill="#c8c8c8"/><rect x="2586.3" y="2179" width="22" height="22" fill="#c8c8c8"/><rect x="2669.7" y="2167" width="22" height="22" fill="none" stroke="#888" stroke-width="2.2"/><rect x="2681.7" y="2179" width="22" height="22" fill="none" stroke="#c8c8c8" stroke-width="2.2"/><rect x="2681.7" y="2179" width="10" height="10" fill="#c8c8c8"/><rect x="2765" y="2167" width="22" height="22" fill="none" stroke="#c8c8c8" stroke-width="2.2"/><rect x="2777" y="2179" width="22" height="22" fill="none" stroke="#c8c8c8" stroke-width="2.2"/><rect x="2777" y="2179" width="10" height="10" fill="none" stroke="#c8c8c8" stroke-width="2.2"/><rect x="2860.3" y="2167" width="22" height="22" fill="none" stroke="#c8c8c8" stroke-width="2.2"/><rect x="2872.3" y="2179" width="22" height="22" fill="#c8c8c8"/></svg>
<!-- g_top -->
<div class="a" style="left:0.0px;top:0.0px;width:4000.0px;height:3.0px;background:#f4f4f4;"></div>
<div class="a" style="left:4.0px;top:3.0px;width:3996.0px;height:84.0px;background:#535353;"></div>
<div class="a" style="left:4.0px;top:3.0px;width:3996.0px;height:2.0px;background:#2b2b2b;"></div>
<div class="a" style="left:4.0px;top:86.0px;width:3996.0px;height:2.5px;background:#3b3b3b;"></div>
<div class="a" style="left:4.0px;top:88.5px;width:3996.0px;height:81.0px;background:#535353;"></div>
<div class="a" style="left:4.0px;top:169.5px;width:3996.0px;height:2.0px;background:#3b3b3b;"></div>
<div class="a" style="left:4.0px;top:171.5px;width:3300.0px;height:69.0px;background:#424242;"></div>
<div class="a" style="left:4.0px;top:171.5px;width:613.5px;height:69.0px;background:#535353;"></div>
<div class="a" style="left:617.5px;top:171.5px;width:2.0px;height:69.0px;background:#393939;"></div>
<div class="a" style="left:1550.0px;top:171.5px;width:2.0px;height:69.0px;background:#393939;"></div>
<div class="a" style="left:4.0px;top:240.0px;width:3300.0px;height:2.0px;background:#393939;"></div>
<div class="t" style="left:1866.8px;top:30.2px;font-size:32px;color:#d9d9d9;letter-spacing:0.45px;">Adobe Illustrator 2023</div>
<div class="t" style="left:35.0px;top:116.3px;font-size:25px;color:#dedede;letter-spacing:0.73px;">Type</div>
<div class="t" style="left:59.6px;top:192.2px;font-size:25px;color:#f2f2f2;letter-spacing:0.68px;font-weight:bold;">UofA Infographic* @ 100 % (RGB/Preview)</div>
<div class="t" style="left:679.1px;top:192.2px;font-size:25px;color:#b9b9b9;letter-spacing:0.72px;font-weight:bold;">AdobeStock_588138853 (1) [Converted].ai @ 19.2 % (RGB/Preview)</div>
<div class="t" style="left:500.6px;top:117.0px;font-size:26px;color:#efefef;letter-spacing:-0.14px;">Stroke:</div>
<div class="t" style="left:1107.5px;top:117.0px;font-size:26px;color:#efefef;letter-spacing:-0.12px;">Opacity:</div>
<div class="t" style="left:1534.6px;top:117.0px;font-size:26px;color:#efefef;letter-spacing:-0.11px;">Character:</div>
<div class="t" style="left:2558.0px;top:114.9px;font-size:26.5px;color:#f4f4f4;letter-spacing:-0.61px;">Paragraph:</div>
<div class="t" style="left:3211.0px;top:114.9px;font-size:26.5px;color:#f4f4f4;letter-spacing:0.27px;">Align</div>
<div class="t" style="left:3308.5px;top:114.9px;font-size:26.5px;color:#f4f4f4;letter-spacing:0.28px;">Transform</div>
<div class="a" style="left:267.4px;top:103.3px;width:95.0px;height:51.0px;background:#454545;border:2px solid #656565;border-radius:5px;box-sizing:border-box;"></div>
<div class="a" style="left:270.6px;top:106.0px;width:46.0px;height:46.0px;background:#9f1f26;border:2px solid #f4f4f4;box-sizing:border-box;"></div>
<div class="a" style="left:376.8px;top:103.3px;width:93.0px;height:51.0px;background:#454545;border:2px solid #656565;border-radius:5px;box-sizing:border-box;"></div>
<div class="a" style="left:379.5px;top:106.0px;width:46.0px;height:46.0px;background:#ffffff;"></div>
<div class="a" style="left:596.7px;top:103.3px;width:212.4px;height:51.0px;background:#454545;border:2px solid #656565;border-radius:5px;box-sizing:border-box;"></div>
<div class="a" style="left:639.5px;top:105.3px;width:2.0px;height:47.0px;background:#5f5f5f;"></div>
<div class="a" style="left:764.0px;top:105.3px;width:2.0px;height:47.0px;background:#5f5f5f;"></div>
<div class="a" style="left:822.8px;top:104.0px;width:266.0px;height:50.6px;background:#5a5a5a;border-radius:5px;"></div>
<div class="a" style="left:822.8px;top:104.0px;width:220.2px;height:50.6px;background:#838383;"></div>
<div class="a" style="left:1218.0px;top:103.3px;width:188.5px;height:51.0px;background:#454545;border:2px solid #656565;border-radius:5px;box-sizing:border-box;"></div>
<div class="a" style="left:1360.5px;top:105.3px;width:2.0px;height:47.0px;background:#5f5f5f;"></div>
<div class="t" style="left:1228.2px;top:115.0px;font-size:26px;color:#f4f4f4;letter-spacing:-1.83px;">100%</div>
<div class="a" style="left:257.0px;top:20.0px;width:2.5px;height:49.0px;background:#616161;"></div>
<div class="a" style="left:251.5px;top:99.0px;width:2.0px;height:59.0px;background:#494949;"></div>
<div class="a" style="left:1420.5px;top:99.0px;width:2.0px;height:59.0px;background:#494949;"></div>
<div class="a" style="left:1514.5px;top:99.0px;width:2.0px;height:59.0px;background:#494949;"></div>
<div class="a" style="left:3189.6px;top:99.0px;width:2.0px;height:59.0px;background:#494949;"></div>
<div class="a" style="left:3287.0px;top:99.0px;width:2.0px;height:59.0px;background:#494949;"></div>
<div class="a" style="left:3828.0px;top:20.6px;width:2.5px;height:47.0px;background:#616161;"></div>
<div class="a" style="left:1666.5px;top:102.3px;width:448.0px;height:52.0px;background:#4b93e6;border-radius:7px;"></div>
<div class="a" style="left:1670.8px;top:105.5px;width:397.0px;height:45.5px;background:linear-gradient(#ffffff,#ffffff 70%,#f1f1f1);"></div>
<div class="a" style="left:2068.5px;top:104.5px;width:44.0px;height:47.6px;background:#2a2a2a;border-radius:0 5px 5px 0;"></div>
<div class="t" style="left:1729.7px;top:114.1px;font-size:27px;color:#2e2e2e;letter-spacing:-0.17px;">proxima</div>
<div class="a" style="left:1826.5px;top:113.0px;width:2.2px;height:31.5px;background:#111;"></div>
<div class="a" style="left:2128.0px;top:103.3px;width:182.4px;height:51.0px;background:#454545;border:2px solid #656565;border-radius:5px;box-sizing:border-box;"></div>
<div class="a" style="left:2266.0px;top:105.3px;width:2.0px;height:47.0px;background:#5f5f5f;"></div>
<div class="t" style="left:2144.9px;top:115.5px;font-size:27px;color:#ffffff;letter-spacing:-1.88px;">Black</div>
<div class="a" style="left:2326.2px;top:103.3px;width:211.8px;height:51.0px;background:#454545;border:2px solid #656565;border-radius:5px;box-sizing:border-box;"></div>
<div class="a" style="left:2369.0px;top:105.3px;width:2.0px;height:47.0px;background:#5f5f5f;"></div>
<div class="a" style="left:2493.0px;top:105.3px;width:2.0px;height:47.0px;background:#5f5f5f;"></div>
<div class="t" style="left:2380.3px;top:113.5px;font-size:26px;color:#f4f4f4;letter-spacing:0.92px;">12 pt</div>
<div class="a" style="left:2700.0px;top:99.5px;width:180.5px;height:55.0px;background:#535353;border:2px solid #626262;border-radius:5px;box-sizing:border-box;"></div>
<div class="a" style="left:2702.0px;top:101.5px;width:54.5px;height:51.0px;background:#2c2c2c;border-radius:3px 0 0 3px;"></div>
<div class="a" style="left:2757.5px;top:101.5px;width:2.0px;height:51.0px;background:#626262;"></div>
<div class="a" style="left:2818.0px;top:101.5px;width:2.0px;height:51.0px;background:#626262;"></div>
<div class="a" style="left:3609.0px;top:15.3px;width:127.0px;height:57.7px;background:#3273de;border-radius:29px;"></div>
<div class="t" style="left:3632.6px;top:30.0px;font-size:29.5px;color:#ffffff;letter-spacing:-1.00px;font-weight:bold;">Share</div>
<div class="a" style="left:3304.0px;top:171.5px;width:5.5px;height:2310.0px;background:#3d3d3d;"></div>
<svg class="a" style="left:0;top:0;" width="4000" height="2475" viewBox="0 0 4000 2475">
<circle cx="35.1" cy="46.6" r="14.6" fill="#ee6a5f"/><circle cx="35.1" cy="46.6" r="4.9" fill="#6e0f0a"/><circle cx="84" cy="46.6" r="14.6" fill="#f5c04f"/><circle cx="132.9" cy="46.6" r="14.6" fill="#62c655"/>
<path fill="#c6c6c6" d="M206.3 26L228.8 47.5H223.2V63.6H211.8V50H200.8V63.6H189.4V47.5H183.8Z"/>
<line x1="14.5" y1="106" x2="14.5" y2="152" stroke="#3a3a3a" stroke-width="4" stroke-dasharray="2.5 3.2"/>
<path d="M330.1 124.8L339.6 134.2L349.1 124.8" fill="none" stroke="#e6e6e6" stroke-width="3"/>
<path d="M438.0 124.8L447.5 134.2L457.0 124.8" fill="none" stroke="#e6e6e6" stroke-width="3"/>
<path d="M608.5 123.2L618.0 113.8L627.5 123.2" fill="none" stroke="#e6e6e6" stroke-width="3"/>
<path d="M608.5 136.2L618.0 145.8L627.5 136.2" fill="none" stroke="#e6e6e6" stroke-width="3"/>
<path d="M777.5 124.8L787.0 134.2L796.5 124.8" fill="none" stroke="#e6e6e6" stroke-width="3"/>
<path d="M1057.5 125.2L1066.0 133.8L1074.5 125.2" fill="none" stroke="#6b6b6b" stroke-width="3"/>
<path d="M1377.2 119.5L1386.8 129.0L1377.2 138.5" fill="none" stroke="#e6e6e6" stroke-width="3"/>
<path d="M2079.5 124.8L2089.0 134.2L2098.5 124.8" fill="none" stroke="#fff" stroke-width="3"/>
<path d="M2279.1 124.8L2288.6 134.2L2298.1 124.8" fill="none" stroke="#e6e6e6" stroke-width="3"/>
<path d="M2338.5 122.2L2348.0 112.8L2357.5 122.2" fill="none" stroke="#e6e6e6" stroke-width="3"/>
<path d="M2338.5 136.2L2348.0 145.8L2357.5 136.2" fill="none" stroke="#e6e6e6" stroke-width="3"/>
<path d="M2505.0 124.8L2514.5 134.2L2524.0 124.8" fill="none" stroke="#e6e6e6" stroke-width="3"/>
<path d="M2959.5 122.8L2969.0 132.2L2978.5 122.8" fill="none" stroke="#e6e6e6" stroke-width="3"/>
<path d="M3050.5 122.8L3060.0 132.2L3069.5 122.8" fill="none" stroke="#e6e6e6" stroke-width="3"/>
<path d="M3152.5 122.8L3162.0 132.2L3171.5 122.8" fill="none" stroke="#e6e6e6" stroke-width="3"/>
<path d="M3884.2 122.2L3893.7 131.8L3903.2 122.2" fill="none" stroke="#6e6e6e" stroke-width="3"/>
<rect x="395.5" y="122" width="14" height="14" fill="none" stroke="#111" stroke-width="2.2"/><line x1="383" y1="148" x2="421" y2="110" stroke="#e8322a" stroke-width="4"/>
<line x1="500.6" y1="146.0" x2="582.0" y2="146.0" stroke="#cfcfcf" stroke-width="2.5" stroke-dasharray="2.6 2.6"/>
<line x1="1107.5" y1="146.0" x2="1202.0" y2="146.0" stroke="#cfcfcf" stroke-width="2.5" stroke-dasharray="2.6 2.6"/>
<line x1="1534.6" y1="146.0" x2="1655.0" y2="146.0" stroke="#cfcfcf" stroke-width="2.5" stroke-dasharray="2.6 2.6"/>
<line x1="2558.0" y1="143.5" x2="2684.0" y2="143.5" stroke="#cfcfcf" stroke-width="2.5" stroke-dasharray="2.6 2.6"/>
<line x1="3211.0" y1="143.5" x2="3271.0" y2="143.5" stroke="#cfcfcf" stroke-width="2.5" stroke-dasharray="2.6 2.6"/>
<line x1="3308.5" y1="143.5" x2="3430.5" y2="143.5" stroke="#cfcfcf" stroke-width="2.5" stroke-dasharray="2.6 2.6"/>
<circle cx="1468" cy="128" r="18" fill="#8c8c8c" stroke="#c9c9c9" stroke-width="2.4"/><path d="M1468 128L1468 110A18 18 0 0 1 1483.6 119Z" fill="#e0e0e0"/><path d="M1468 128L1483.6 137A18 18 0 0 1 1468 146Z" fill="#bdbdbd"/><path d="M1468 128L1452.4 137A18 18 0 0 1 1452.4 119Z" fill="#5a5a5a"/><path d="M1468 128L1468 146A18 18 0 0 1 1452.4 137Z" fill="#333"/><circle cx="1468" cy="128" r="4" fill="#d9d9d9" stroke="#666" stroke-width="1.5"/>
<circle cx="1685.5" cy="125" r="10" fill="none" stroke="#3c3c3c" stroke-width="2.6"/><line x1="1692.5" y1="132.5" x2="1700" y2="141" stroke="#3c3c3c" stroke-width="3.2"/><path d="M1702.0 125.2L1709.5 132.8L1717.0 125.2" fill="none" stroke="#444" stroke-width="2.4"/>
<path d="M2037 118.7L2055.4 137.1M2055.4 118.7L2037 137.1" stroke="#3a3a3a" stroke-width="3"/>
<path d="M20 198.5L36 214.5M36 198.5L20 214.5" stroke="#e8e8e8" stroke-width="3"/><path d="M638.5 199L653.5 214M653.5 199L638.5 214" stroke="#b5b5b5" stroke-width="3"/>
<line x1="2711.0" y1="112.4" x2="2742.1" y2="112.4" stroke="#fff" stroke-width="2.8"/>
<line x1="2711.0" y1="119.4" x2="2748.0" y2="119.4" stroke="#fff" stroke-width="2.8"/>
<line x1="2711.0" y1="126.5" x2="2742.1" y2="126.5" stroke="#fff" stroke-width="2.8"/>
<line x1="2711.0" y1="133.6" x2="2748.0" y2="133.6" stroke="#fff" stroke-width="2.8"/>
<line x1="2711.0" y1="140.7" x2="2737.6" y2="140.7" stroke="#fff" stroke-width="2.8"/>
<line x1="2772.2" y1="112.4" x2="2805.8" y2="112.4" stroke="#d6d6d6" stroke-width="2.6"/>
<line x1="2769.0" y1="119.4" x2="2809.0" y2="119.4" stroke="#d6d6d6" stroke-width="2.6"/>
<line x1="2772.2" y1="126.5" x2="2805.8" y2="126.5" stroke="#d6d6d6" stroke-width="2.6"/>
<line x1="2769.0" y1="133.6" x2="2809.0" y2="133.6" stroke="#d6d6d6" stroke-width="2.6"/>
<line x1="2774.6" y1="140.7" x2="2803.4" y2="140.7" stroke="#d6d6d6" stroke-width="2.6"/>
<line x1="2836.1" y1="112.4" x2="2868.0" y2="112.4" stroke="#d6d6d6" stroke-width="2.6"/>
<line x1="2830.0" y1="119.4" x2="2868.0" y2="119.4" stroke="#d6d6d6" stroke-width="2.6"/>
<line x1="2836.1" y1="126.5" x2="2868.0" y2="126.5" stroke="#d6d6d6" stroke-width="2.6"/>
<line x1="2830.0" y1="133.6" x2="2868.0" y2="133.6" stroke="#d6d6d6" stroke-width="2.6"/>
<line x1="2840.6" y1="140.7" x2="2868.0" y2="140.7" stroke="#d6d6d6" stroke-width="2.6"/>
<circle cx="2911.5" cy="117.5" r="4.6" fill="#d0d0d0"/><line x1="2921" y1="113.5" x2="2944" y2="113.5" stroke="#d0d0d0" stroke-width="2.6"/><line x1="2921" y1="121.5" x2="2944" y2="121.5" stroke="#d0d0d0" stroke-width="2.6"/><circle cx="2911.5" cy="137.5" r="4.6" fill="#d0d0d0"/><line x1="2921" y1="133.5" x2="2944" y2="133.5" stroke="#d0d0d0" stroke-width="2.6"/><line x1="2921" y1="141.5" x2="2944" y2="141.5" stroke="#d0d0d0" stroke-width="2.6"/><line x1="3012" y1="113.5" x2="3034" y2="113.5" stroke="#d0d0d0" stroke-width="2.6"/><line x1="3012" y1="121.5" x2="3034" y2="121.5" stroke="#d0d0d0" stroke-width="2.6"/><line x1="3012" y1="133.5" x2="3034" y2="133.5" stroke="#d0d0d0" stroke-width="2.6"/><line x1="3012" y1="141.5" x2="3034" y2="141.5" stroke="#d0d0d0" stroke-width="2.6"/><text x="2997" y="125" font-size="20" fill="#d0d0d0" font-family="Liberation Sans">1</text><text x="2997" y="145.5" font-size="20" fill="#d0d0d0" font-family="Liberation Sans">2</text>
<path d="M3098 118Q3117 100 3137 118L3131 143Q3117 131 3104 143Z M3110 109.5L3112.5 135.5 M3125 109.5L3122.5 135.5 M3100.5 128Q3117 114 3134.5 128" fill="none" stroke="#cfcfcf" stroke-width="2.4"/>
<circle cx="3779" cy="42" r="14" fill="none" stroke="#cfcfcf" stroke-width="4"/><line x1="3789" y1="52.5" x2="3800.5" y2="63" stroke="#cfcfcf" stroke-width="5" stroke-linecap="round"/>
<path fill="#cdcdcd" d="M3872.7 32.4H3892.5V59H3872.7ZM3895.5 32.4H3915V44H3895.5ZM3895.5 47H3915V59H3895.5Z"/>
<rect x="3959.5" y="31" width="37" height="29" fill="none" stroke="#cdcdcd" stroke-width="3"/><path d="M3967 38v3.5m0 2.5v3.5m0 2.5v3.5" stroke="#cdcdcd" stroke-width="4.4"/>
<path fill="#727272" d="M3770 113.5H3780V123.5H3770ZM3787.5 113.5H3797.5V123.5H3787.5ZM3770 131H3780V141H3770ZM3787.5 131H3797.5V141H3787.5Z"/><path d="M3783.7 109V145M3765.5 127.3H3802" stroke="#727272" stroke-width="1.6"/>
<path fill="#cfcfcf" d="M3831.5 111H3840.5V121.5H3831.5ZM3831.5 124H3840.5V134H3831.5ZM3831.5 136.5H3840.5V145H3831.5Z"/><path d="M3846 120.5H3856A6.8 6.8 0 0 1 3856 134H3846" fill="none" stroke="#cfcfcf" stroke-width="4.4" stroke-dasharray="5.2 2.6"/>
<rect x="3951" y="118.3" width="4.6" height="4.4" fill="#cfcfcf"/><line x1="3958.5" y1="120.5" x2="3978" y2="120.5" stroke="#cfcfcf" stroke-width="2.6"/><rect x="3951" y="126.3" width="4.6" height="4.4" fill="#cfcfcf"/><line x1="3958.5" y1="128.5" x2="3978" y2="128.5" stroke="#cfcfcf" stroke-width="2.6"/><rect x="3951" y="134.3" width="4.6" height="4.4" fill="#cfcfcf"/><line x1="3958.5" y1="136.5" x2="3978" y2="136.5" stroke="#cfcfcf" stroke-width="2.6"/></svg>
<!-- g_right -->
<div class="a" style="left:3264.0px;top:242.0px;width:40.0px;height:2240.0px;background:#535353;"></div>
<div class="a" style="left:3266.6px;top:1387.0px;width:34.0px;height:61.0px;background:#686868;border-radius:17px;"></div>
<div class="a" style="left:3304.0px;top:171.5px;width:5.5px;height:2310.0px;background:#3d3d3d;"></div>
<div class="a" style="left:3309.5px;top:171.5px;width:700.0px;height:2310.0px;background:#535353;"></div>
<div class="a" style="left:3309.5px;top:171.5px;width:700.0px;height:28.0px;background:#424242;"></div>
<div class="a" style="left:3309.5px;top:198.5px;width:700.0px;height:2.5px;background:#383838;"></div>
<div class="a" style="left:3402.0px;top:201.0px;width:6.0px;height:2280.0px;background:#3d3d3d;"></div>
<div class="a" style="left:3404.0px;top:201.0px;width:1.5px;height:2280.0px;background:#4d4d4d;"></div>
<div class="a" style="left:3310.0px;top:366.3px;width:92.0px;height:3.0px;background:#3a3a3a;"></div>
<div class="a" style="left:3310.0px;top:535.5px;width:92.0px;height:3.0px;background:#3a3a3a;"></div>
<div class="a" style="left:3310.0px;top:704.3px;width:92.0px;height:3.0px;background:#3a3a3a;"></div>
<div class="a" style="left:3310.0px;top:804.8px;width:92.0px;height:3.0px;background:#3a3a3a;"></div>
<div class="a" style="left:3310.0px;top:905.3px;width:92.0px;height:3.0px;background:#3a3a3a;"></div>
<div class="a" style="left:3408.0px;top:201.0px;width:600.0px;height:64.7px;background:#424242;"></div>
<div class="a" style="left:3408.0px;top:264.5px;width:600.0px;height:2.0px;background:#383838;"></div>
<div class="a" style="left:3408.0px;top:201.0px;width:172.0px;height:66.0px;background:#535353;"></div>
<div class="a" style="left:3580.0px;top:201.0px;width:2.0px;height:63.5px;background:#383838;"></div>
<div class="a" style="left:3582.0px;top:201.0px;width:150.0px;height:63.5px;background:#464646;"></div>
<div class="a" style="left:3732.0px;top:201.0px;width:2.0px;height:63.5px;background:#383838;"></div>
<div class="t" style="left:3430.3px;top:217.9px;font-size:25px;color:#ffffff;letter-spacing:0.60px;font-weight:bold;">Properties</div>
<div class="t" style="left:3602.0px;top:217.9px;font-size:25px;color:#bdbdbd;letter-spacing:0.52px;font-weight:bold;">Libraries</div>
<div class="t" style="left:3432.8px;top:295.3px;font-size:26px;color:#dcdcdc;letter-spacing:0.01px;">Type</div>
<div class="a" style="left:3408.0px;top:347.3px;width:581.0px;height:2.0px;background:#494949;"></div>
<div class="a" style="left:3408.0px;top:652.1px;width:581.0px;height:2.0px;background:#494949;"></div>
<div class="a" style="left:3408.0px;top:1071.0px;width:581.0px;height:2.0px;background:#494949;"></div>
<div class="a" style="left:3408.0px;top:1455.2px;width:581.0px;height:2.0px;background:#494949;"></div>
<div class="a" style="left:3408.0px;top:1660.9px;width:581.0px;height:2.0px;background:#494949;"></div>
<div class="a" style="left:3408.0px;top:1825.0px;width:581.0px;height:2.0px;background:#494949;"></div>
<div class="a" style="left:3408.0px;top:2031.0px;width:581.0px;height:2.0px;background:#494949;"></div>
<div class="t" style="left:3432.8px;top:379.0px;font-size:26px;color:#dcdcdc;letter-spacing:0.64px;">Transform</div>
<div class="t" style="left:3504.8px;top:437.2px;font-size:26px;color:#dcdcdc;letter-spacing:-1.97px;">X:</div>
<div class="t" style="left:3504.8px;top:499.8px;font-size:26px;color:#dcdcdc;letter-spacing:-0.53px;">Y:</div>
<div class="t" style="left:3714.7px;top:437.2px;font-size:26px;color:#dcdcdc;letter-spacing:-3.29px;">W:</div>
<div class="t" style="left:3716.0px;top:499.8px;font-size:26px;color:#dcdcdc;letter-spacing:-2.00px;">H:</div>
<div class="a" style="left:3542.0px;top:424.2px;width:135.6px;height:48.8px;background:#454545;border:2px solid #656565;border-radius:5px;box-sizing:border-box;"></div>
<div class="a" style="left:3758.4px;top:424.2px;width:135.6px;height:48.8px;background:#454545;border:2px solid #656565;border-radius:5px;box-sizing:border-box;"></div>
<div class="a" style="left:3542.0px;top:487.3px;width:135.6px;height:49.4px;background:#454545;border:2px solid #656565;border-radius:5px;box-sizing:border-box;"></div>
<div class="a" style="left:3758.4px;top:487.3px;width:135.6px;height:49.4px;background:#454545;border:2px solid #656565;border-radius:5px;box-sizing:border-box;"></div>
<div class="t" style="left:3555.8px;top:433.6px;font-size:26px;color:#f2f2f2;letter-spacing:0.81px;">2.2533 in</div>
<div class="t" style="left:3555.8px;top:496.2px;font-size:26px;color:#f2f2f2;letter-spacing:0.81px;">6.0663 in</div>
<div class="t" style="left:3770.0px;top:433.6px;font-size:26px;color:#f2f2f2;letter-spacing:0.87px;">0.812 in</div>
<div class="t" style="left:3770.0px;top:496.2px;font-size:26px;color:#f2f2f2;letter-spacing:0.88px;">0.1857 in</div>
<div class="a" style="left:3918.5px;top:453.0px;width:58.2px;height:58.2px;background:#2d2d2d;border-radius:5px;"></div>
<div class="a" style="left:3551.0px;top:552.0px;width:135.7px;height:48.4px;background:#454545;border:2px solid #656565;border-radius:5px;box-sizing:border-box;"></div>
<div class="a" style="left:3641.0px;top:554.0px;width:2.0px;height:44.4px;background:#5f5f5f;"></div>
<div class="t" style="left:3560.0px;top:559.8px;font-size:26px;color:#f2f2f2;">0°</div>
<div class="t" style="left:3432.8px;top:685.5px;font-size:26px;color:#dcdcdc;letter-spacing:-0.22px;">Appearance</div>
<div class="t" style="left:3506.3px;top:756.0px;font-size:26px;color:#dcdcdc;letter-spacing:-0.17px;">Fill</div>
<div class="t" style="left:3506.3px;top:824.4px;font-size:26px;color:#f2f2f2;letter-spacing:-0.05px;">Stroke</div>
<div class="t" style="left:3506.3px;top:895.4px;font-size:26px;color:#f2f2f2;letter-spacing:0.23px;">Opacity</div>
<div class="a" style="left:3636.5px;top:811.2px;width:169.2px;height:49.1px;background:#454545;border:2px solid #656565;border-radius:5px;box-sizing:border-box;"></div>
<div class="a" style="left:3679.2px;top:813.2px;width:2.0px;height:45.1px;background:#5f5f5f;"></div>
<div class="a" style="left:3760.0px;top:813.2px;width:2.0px;height:45.1px;background:#5f5f5f;"></div>
<div class="a" style="left:3636.5px;top:882.0px;width:169.2px;height:49.2px;background:#454545;border:2px solid #656565;border-radius:5px;box-sizing:border-box;"></div>
<div class="a" style="left:3760.0px;top:884.0px;width:2.0px;height:45.2px;background:#5f5f5f;"></div>
<div class="t" style="left:3647.4px;top:890.0px;font-size:26px;color:#f2f2f2;letter-spacing:-1.83px;">100%</div>
<div class="t" style="left:3450.0px;top:973.1px;font-size:33px;color:#c9c9c9;font-style:italic;font-family:"Liberation Serif",serif;">fx</div>
<div class="t" style="left:3432.8px;top:1105.0px;font-size:26px;color:#dcdcdc;letter-spacing:-0.03px;">Character</div>
<div class="a" style="left:3433.3px;top:1158.6px;width:536.2px;height:50.0px;background:#454545;border:2px solid #656565;border-radius:5px;box-sizing:border-box;"></div>
<div class="a" style="left:3924.2px;top:1160.6px;width:2.0px;height:46.0px;background:#5f5f5f;"></div>
<div class="t" style="left:3499.0px;top:1171.4px;font-size:27px;color:#f2f2f2;letter-spacing:-0.56px;">Proxima Nova</div>
<div class="a" style="left:3433.3px;top:1222.9px;width:536.2px;height:49.0px;background:#454545;border:2px solid #656565;border-radius:5px;box-sizing:border-box;"></div>
<div class="a" style="left:3924.2px;top:1224.9px;width:2.0px;height:45.0px;background:#5f5f5f;"></div>
<div class="t" style="left:3450.5px;top:1235.7px;font-size:27px;color:#f2f2f2;letter-spacing:-1.38px;">Black</div>
<div class="a" style="left:3485.7px;top:1286.2px;width:198.1px;height:49.5px;background:#454545;border:2px solid #656565;border-radius:5px;box-sizing:border-box;"></div>
<div class="a" style="left:3527.6px;top:1288.2px;width:2.0px;height:45.5px;background:#5f5f5f;"></div>
<div class="a" style="left:3638.5px;top:1288.2px;width:2.0px;height:45.5px;background:#5f5f5f;"></div>
<div class="t" style="left:3539.5px;top:1293.8px;font-size:27px;color:#f2f2f2;letter-spacing:0.11px;">12 pt</div>
<div class="a" style="left:3771.4px;top:1286.2px;width:198.1px;height:49.5px;background:#454545;border:2px solid #656565;border-radius:5px;box-sizing:border-box;"></div>
<div class="a" style="left:3814.7px;top:1288.2px;width:2.0px;height:45.5px;background:#5f5f5f;"></div>
<div class="a" style="left:3924.2px;top:1288.2px;width:2.0px;height:45.5px;background:#5f5f5f;"></div>
<div class="t" style="left:3824.3px;top:1293.8px;font-size:27px;color:#f2f2f2;letter-spacing:0.31px;">(14.4 pt</div>
<div class="a" style="left:3485.7px;top:1350.0px;width:198.1px;height:48.5px;background:#454545;border:2px solid #656565;border-radius:5px;box-sizing:border-box;"></div>
<div class="a" style="left:3527.6px;top:1352.0px;width:2.0px;height:44.5px;background:#5f5f5f;"></div>
<div class="a" style="left:3638.5px;top:1352.0px;width:2.0px;height:44.5px;background:#5f5f5f;"></div>
<div class="t" style="left:3538.0px;top:1357.1px;font-size:27px;color:#f2f2f2;letter-spacing:-0.08px;">Auto</div>
<div class="a" style="left:3771.4px;top:1350.0px;width:198.1px;height:48.5px;background:#454545;border:2px solid #656565;border-radius:5px;box-sizing:border-box;"></div>
<div class="a" style="left:3814.7px;top:1352.0px;width:2.0px;height:44.5px;background:#5f5f5f;"></div>
<div class="a" style="left:3924.2px;top:1352.0px;width:2.0px;height:44.5px;background:#5f5f5f;"></div>
<div class="t" style="left:3825.0px;top:1357.1px;font-size:27px;color:#f2f2f2;">0</div>
<div class="t" style="left:3432.4px;top:1489.0px;font-size:26px;color:#dcdcdc;letter-spacing:-0.30px;">Paragraph</div>
<div class="a" style="left:3434.8px;top:1545.2px;width:59.5px;height:57.7px;background:#2d2d2d;border-radius:5px;"></div>
<div class="t" style="left:3432.4px;top:1681.8px;font-size:26px;color:#dcdcdc;letter-spacing:0.47px;">Bullets And Numbering</div>
<div class="a" style="left:3890.0px;top:2131.0px;width:97.0px;height:49.0px;background:#535353;border:2px solid #666;border-radius:5px;box-sizing:border-box;"></div>
<svg class="a" style="left:0;top:0;" width="4000" height="2475" viewBox="0 0 4000 2475">
<path d="M3377.6 178.8L3371.6 185.3L3377.6 191.8" fill="none" stroke="#d0d0d0" stroke-width="2.2"/>
<path d="M3386.8 178.8L3380.8 185.3L3386.8 191.8" fill="none" stroke="#d0d0d0" stroke-width="2.2"/>
<path d="M3985.0 178.8L3991.0 185.3L3985.0 191.8" fill="none" stroke="#d0d0d0" stroke-width="2.2"/>
<path d="M3994.2 178.8L4000.2 185.3L3994.2 191.8" fill="none" stroke="#d0d0d0" stroke-width="2.2"/>
<path d="M3278.5 267.0L3286.5 260.0L3294.5 267.0" fill="none" stroke="#6e6e6e" stroke-width="2"/>
<line x1="3332.5" y1="213.7" x2="3379.5" y2="213.7" stroke="#3c3c3c" stroke-width="9.5" stroke-dasharray="2.400 2.500"/><line x1="3332.5" y1="381.7" x2="3379.5" y2="381.7" stroke="#3c3c3c" stroke-width="9.5" stroke-dasharray="2.400 2.500"/><line x1="3332.5" y1="550.2" x2="3379.5" y2="550.2" stroke="#3c3c3c" stroke-width="9.5" stroke-dasharray="2.400 2.500"/><line x1="3332.5" y1="719" x2="3379.5" y2="719" stroke="#3c3c3c" stroke-width="9.5" stroke-dasharray="2.400 2.500"/><line x1="3332.5" y1="819.5" x2="3379.5" y2="819.5" stroke="#3c3c3c" stroke-width="9.5" stroke-dasharray="2.400 2.500"/><path d="M3347.2 265h22v14a3 3 0 0 1 -3 3h-16a3 3 0 0 1 -3 -3z" fill="#c8c8c8"/><path d="M3352.2 264l-7 -19q-3 -8 3 -10q2 10 6 12l3 17z M3354.2 232h6v10h2v8h-2l1 14h-6l1 -14h-2v-8h2z M3363.2 264l5 -16q-4 -4 2 -6q6 -1 9 4q-4 0 -6 3l-5 15z" fill="#c8c8c8"/><circle cx="3358.2" cy="315.5" r="9.800" fill="#c8c8c8"/><circle cx="3348.2" cy="329" r="9.800" fill="#c8c8c8"/><circle cx="3368.2" cy="329" r="9.800" fill="#c8c8c8"/><path d="M3355.2 322h6v8q0 10 8 13v2.500h-22v-2.500q8 -3 8 -13z" fill="#c8c8c8"/><circle cx="3358.2" cy="427.2" r="15" fill="#c8c8c8"/><circle cx="3358.2" cy="427.2" r="20" fill="none" stroke="#c8c8c8" stroke-width="2.200" stroke-dasharray="6 3.500"/><rect x="3349.2" y="478.500" width="28" height="34" fill="none" stroke="#c8c8c8" stroke-width="3"/><rect x="3339.2" y="497" width="16" height="16" fill="#535353" stroke="#c8c8c8" stroke-width="2.600"/><rect x="3345.2" y="503" width="12" height="12" fill="#535353" stroke="#c8c8c8" stroke-width="2.400"/><path d="M3358.2 575l20 11.500l-20 11.500l-20 -11.500z" fill="#c8c8c8"/><path d="M3338.2 600.500l6 -3.500l14 8l14 -8l6 3.500l-20 11.500z" fill="#c8c8c8"/><path d="M3355.2 650h-16v36h36v-15" fill="none" stroke="#c8c8c8" stroke-width="4.400"/><path d="M3359.2 669l19 -19M3364.2 644h16v16" fill="none" stroke="#c8c8c8" stroke-width="4.400"/><rect x="3336.2" y="742" width="25" height="34" fill="none" stroke="#c8c8c8" stroke-width="2.400"/><rect x="3347.2" y="761" width="32" height="23" fill="#535353" stroke="#c8c8c8" stroke-width="2.400"/><text x="3339.2" y="880" font-size="50" fill="#c8c8c8" stroke="#c8c8c8" stroke-width="1.300" font-family="Liberation Sans">A</text><line x1="3375.7" y1="841" x2="3375.7" y2="886" stroke="#c8c8c8" stroke-width="3"/><rect x="3434.5" y="459.5" width="9" height="9" fill="none" stroke="#d0d0d0" stroke-width="1.800"/><rect x="3434.5" y="476.7" width="9" height="9" fill="none" stroke="#d0d0d0" stroke-width="1.800"/><rect x="3434.5" y="493.9" width="9" height="9" fill="none" stroke="#d0d0d0" stroke-width="1.800"/><rect x="3451.7" y="459.5" width="9" height="9" fill="none" stroke="#d0d0d0" stroke-width="1.800"/><rect x="3451.2" y="476.2" width="10" height="10" fill="#f0f0f0" stroke="#d0d0d0" stroke-width="1.600"/><rect x="3451.7" y="493.9" width="9" height="9" fill="none" stroke="#d0d0d0" stroke-width="1.800"/><rect x="3468.9" y="459.5" width="9" height="9" fill="none" stroke="#d0d0d0" stroke-width="1.800"/><rect x="3468.9" y="476.7" width="9" height="9" fill="none" stroke="#d0d0d0" stroke-width="1.800"/><rect x="3468.9" y="493.9" width="9" height="9" fill="none" stroke="#d0d0d0" stroke-width="1.800"/><path d="M3443.500 464h8M3460.700 464h8M3443.500 498.400h8M3460.700 498.400h8M3439 468.500v8M3439 485.700v8M3473.400 468.500v8M3473.400 485.700v8M3443.500 481.200h8M3460.700 481.200h8M3456.200 468.500v8M3456.200 485.700v8" stroke="#d0d0d0" stroke-width="1.600"/><path d="M3941 477v-5a6.500 6.500 0 0 1 13 0v10a6.500 6.500 0 0 1 -6.500 6.500M3954 487v5a6.500 6.500 0 0 1 -13 0v-10a6.500 6.500 0 0 1 6.500 -6.500" fill="none" stroke="#fff" stroke-width="3.400"/><path d="M3496 580h26M3496 580l17 -20M3510 580a12 12 0 0 0 -4 -9" fill="none" stroke="#d0d0d0" stroke-width="2.400"/><circle cx="3527" cy="567" r="1.800" fill="#d0d0d0"/><circle cx="3527" cy="579" r="1.800" fill="#d0d0d0"/><path d="M3652.5 571.6L3662.0 581.1L3671.5 571.6" fill="none" stroke="#e6e6e6" stroke-width="3"/>
<path d="M3792.500 569v20l10 -10z" fill="none" stroke="#d0d0d0" stroke-width="2.200"/><path d="M3822.500 568v22l-12 -11z" fill="#d0d0d0"/><path d="M3807 563v33" stroke="#d0d0d0" stroke-width="2" stroke-dasharray="2 2"/><path d="M3855 564h22l-11 10.500z" fill="#d0d0d0"/><path d="M3856.500 594h19l-9.500 -9.500z" fill="none" stroke="#d0d0d0" stroke-width="2.200"/><path d="M3852 579.300h28" stroke="#d0d0d0" stroke-width="2" stroke-dasharray="2 2"/><circle cx="3942.8" cy="628.4" r="4.2" fill="#d2d2d2"/><circle cx="3956" cy="628.4" r="4.2" fill="#d2d2d2"/><circle cx="3969.2" cy="628.4" r="4.2" fill="#d2d2d2"/><circle cx="3942.8" cy="1048.4" r="4.2" fill="#d2d2d2"/><circle cx="3956" cy="1048.4" r="4.2" fill="#d2d2d2"/><circle cx="3969.2" cy="1048.4" r="4.2" fill="#d2d2d2"/><circle cx="3943.0" cy="1432.4" r="4.2" fill="#d2d2d2"/><circle cx="3956.2" cy="1432.4" r="4.2" fill="#d2d2d2"/><circle cx="3969.3999999999996" cy="1432.4" r="4.2" fill="#d2d2d2"/><circle cx="3943.0" cy="1638.1" r="4.2" fill="#d2d2d2"/><circle cx="3956.2" cy="1638.1" r="4.2" fill="#d2d2d2"/><circle cx="3969.3999999999996" cy="1638.1" r="4.2" fill="#d2d2d2"/><circle cx="3942.8" cy="2007" r="4.2" fill="#d2d2d2"/><circle cx="3956" cy="2007" r="4.2" fill="#d2d2d2"/><circle cx="3969.2" cy="2007" r="4.2" fill="#d2d2d2"/><rect x="3434.600" y="745.300" width="41" height="41" fill="#9f1f26" stroke="#f2f2f2" stroke-width="2.400"/><rect x="3432.600" y="743.300" width="45" height="45" fill="none" stroke="#333" stroke-width="1.600"/><rect x="3434.600" y="815.500" width="41" height="41" fill="#fff" stroke="#333" stroke-width="1.600"/><rect x="3446" y="827" width="18.500" height="18.500" fill="#555" stroke="#222" stroke-width="2.600"/><line x1="3436" y1="855" x2="3474.500" y2="817" stroke="#e8322a" stroke-width="4.200"/><line x1="3506.3" y1="851.5" x2="3581.5" y2="851.5" stroke="#cfcfcf" stroke-width="2.5" stroke-dasharray="2.6 2.6"/>
<line x1="3506.3" y1="922.5" x2="3596.0" y2="922.5" stroke="#cfcfcf" stroke-width="2.5" stroke-dasharray="2.6 2.6"/>
<rect x="3435.600" y="889.300" width="38" height="37" fill="#6a6a6a" stroke="#cfcfcf" stroke-width="2"/><rect x="3436.6" y="890.3" width="9" height="8.750" fill="#838383"/><rect x="3436.6" y="907.8" width="9" height="8.750" fill="#838383"/><rect x="3445.6" y="899.0" width="9" height="8.750" fill="#838383"/><rect x="3445.6" y="916.5" width="9" height="8.750" fill="#838383"/><rect x="3454.6" y="890.3" width="9" height="8.750" fill="#838383"/><rect x="3454.6" y="907.8" width="9" height="8.750" fill="#838383"/><rect x="3463.6" y="899.0" width="9" height="8.750" fill="#838383"/><rect x="3463.6" y="916.5" width="9" height="8.750" fill="#838383"/><rect x="3435.600" y="889.300" width="38" height="37" fill="none" stroke="#cfcfcf" stroke-width="2"/><path d="M3648.5 828.8L3658.0 819.2L3667.5 828.8" fill="none" stroke="#e6e6e6" stroke-width="3"/>
<path d="M3648.5 842.2L3658.0 851.8L3667.5 842.2" fill="none" stroke="#e6e6e6" stroke-width="3"/>
<path d="M3774.0 831.2L3783.5 840.8L3793.0 831.2" fill="none" stroke="#e6e6e6" stroke-width="3"/>
<path d="M3777.2 897.5L3786.8 907.0L3777.2 916.5" fill="none" stroke="#e6e6e6" stroke-width="3"/>
<path d="M3479.500 1001.500h6l-3 3.500z" fill="#c9c9c9"/><circle cx="3448" cy="1181" r="9.500" fill="none" stroke="#d0d0d0" stroke-width="2.400"/><line x1="3455" y1="1188.500" x2="3462.500" y2="1197" stroke="#d0d0d0" stroke-width="3"/><path d="M3465.5 1180.2L3473.0 1187.8L3480.5 1180.2" fill="none" stroke="#d0d0d0" stroke-width="2.2"/>
<path d="M3937.5 1179.2L3947.0 1188.8L3956.5 1179.2" fill="none" stroke="#e6e6e6" stroke-width="3"/>
<path d="M3937.5 1243.2L3947.0 1252.8L3956.5 1243.2" fill="none" stroke="#e6e6e6" stroke-width="3"/>
<path d="M3498.2 1303.7L3507.2 1294.7L3516.2 1303.7" fill="none" stroke="#e6e6e6" stroke-width="3"/>
<path d="M3498.2 1318.7L3507.2 1327.7L3516.2 1318.7" fill="none" stroke="#e6e6e6" stroke-width="3"/>
<path d="M3652.7 1307.7L3661.7 1316.7L3670.7 1307.7" fill="none" stroke="#e6e6e6" stroke-width="3"/>
<path d="M3783.9 1303.7L3792.9 1294.7L3801.9 1303.7" fill="none" stroke="#e6e6e6" stroke-width="3"/>
<path d="M3783.9 1318.7L3792.9 1327.7L3801.9 1318.7" fill="none" stroke="#e6e6e6" stroke-width="3"/>
<path d="M3938.4 1307.7L3947.4 1316.7L3956.4 1307.7" fill="none" stroke="#e6e6e6" stroke-width="3"/>
<path d="M3498.2 1367.5L3507.2 1358.5L3516.2 1367.5" fill="none" stroke="#e6e6e6" stroke-width="3"/>
<path d="M3498.2 1382.5L3507.2 1391.5L3516.2 1382.5" fill="none" stroke="#e6e6e6" stroke-width="3"/>
<path d="M3652.7 1371.5L3661.7 1380.5L3670.7 1371.5" fill="none" stroke="#e6e6e6" stroke-width="3"/>
<path d="M3783.9 1367.5L3792.9 1358.5L3801.9 1367.5" fill="none" stroke="#e6e6e6" stroke-width="3"/>
<path d="M3783.9 1382.5L3792.9 1391.5L3801.9 1382.5" fill="none" stroke="#e6e6e6" stroke-width="3"/>
<path d="M3938.4 1371.5L3947.4 1380.5L3956.4 1371.5" fill="none" stroke="#e6e6e6" stroke-width="3"/>
<text x="3432" y="1324" font-size="26" font-weight="bold" fill="#d0d0d0" font-family="Liberation Serif">T</text><text x="3446" y="1324" font-size="44" font-weight="bold" fill="#d0d0d0" font-family="Liberation Serif">T</text><text x="3738" y="1305" font-size="24" fill="#d0d0d0" font-family="Liberation Sans">A</text><text x="3738" y="1327" font-size="24" fill="#d0d0d0" font-family="Liberation Sans">A</text><path d="M3737 1306.500h23M3737 1328h23" stroke="#d0d0d0" stroke-width="1.800"/><path d="M3727 1303v24M3722.500 1309l4.500 -6l4.500 6M3722.500 1321l4.500 6l4.500 -6" fill="none" stroke="#d0d0d0" stroke-width="2.200"/><text x="3432" y="1383" font-size="30" fill="#d0d0d0" font-family="Liberation Sans" letter-spacing="-3">V/A</text><path d="M3456 1392h20M3462 1386.500l-6 5.500l6 5.500" fill="none" stroke="#d0d0d0" stroke-width="2.200"/><rect x="3719" y="1352" width="44" height="26" fill="#c8c8c8"/><text x="3720.500" y="1376" font-size="29" font-weight="bold" fill="#535353" font-family="Liberation Sans" letter-spacing="-2">VA</text><path d="M3721 1388h40M3727 1382.500l-6 5.500l6 5.500M3755 1382.500l6 5.500l-6 5.500" fill="none" stroke="#d0d0d0" stroke-width="2.200"/><line x1="3445.8" y1="1558.6" x2="3476.2" y2="1558.6" stroke="#fff" stroke-width="2.400"/><line x1="3445.8" y1="1566.3" x2="3483.8" y2="1566.3" stroke="#fff" stroke-width="2.400"/><line x1="3445.8" y1="1574" x2="3476.2" y2="1574" stroke="#fff" stroke-width="2.400"/><line x1="3445.8" y1="1581.7" x2="3483.8" y2="1581.7" stroke="#fff" stroke-width="2.400"/><line x1="3445.8" y1="1589.4" x2="3476.2" y2="1589.4" stroke="#fff" stroke-width="2.400"/><line x1="3525.3" y1="1558.6" x2="3555.7" y2="1558.6" stroke="#d0d0d0" stroke-width="2.400"/><line x1="3521.5" y1="1566.3" x2="3559.5" y2="1566.3" stroke="#d0d0d0" stroke-width="2.400"/><line x1="3525.3" y1="1574" x2="3555.7" y2="1574" stroke="#d0d0d0" stroke-width="2.400"/><line x1="3521.5" y1="1581.7" x2="3559.5" y2="1581.7" stroke="#d0d0d0" stroke-width="2.400"/><line x1="3525.3" y1="1589.4" x2="3555.7" y2="1589.4" stroke="#d0d0d0" stroke-width="2.400"/><line x1="3604.3" y1="1558.6" x2="3634.7" y2="1558.6" stroke="#d0d0d0" stroke-width="2.400"/><line x1="3596.7" y1="1566.3" x2="3634.7" y2="1566.3" stroke="#d0d0d0" stroke-width="2.400"/><line x1="3604.3" y1="1574" x2="3634.7" y2="1574" stroke="#d0d0d0" stroke-width="2.400"/><line x1="3596.7" y1="1581.7" x2="3634.7" y2="1581.7" stroke="#d0d0d0" stroke-width="2.400"/><line x1="3604.3" y1="1589.4" x2="3634.7" y2="1589.4" stroke="#d0d0d0" stroke-width="2.400"/><line x1="3672.9" y1="1558.6" x2="3710.9" y2="1558.6" stroke="#d0d0d0" stroke-width="2.400"/><line x1="3672.9" y1="1566.3" x2="3710.9" y2="1566.3" stroke="#d0d0d0" stroke-width="2.400"/><line x1="3672.9" y1="1574" x2="3710.9" y2="1574" stroke="#d0d0d0" stroke-width="2.400"/><line x1="3672.9" y1="1581.7" x2="3710.9" y2="1581.7" stroke="#d0d0d0" stroke-width="2.400"/><line x1="3672.9" y1="1589.4" x2="3698.0" y2="1589.4" stroke="#d0d0d0" stroke-width="2.400"/><line x1="3749.1" y1="1558.6" x2="3787.1" y2="1558.6" stroke="#d0d0d0" stroke-width="2.400"/><line x1="3749.1" y1="1566.3" x2="3787.1" y2="1566.3" stroke="#d0d0d0" stroke-width="2.400"/><line x1="3749.1" y1="1574" x2="3787.1" y2="1574" stroke="#d0d0d0" stroke-width="2.400"/><line x1="3749.1" y1="1581.7" x2="3787.1" y2="1581.7" stroke="#d0d0d0" stroke-width="2.400"/><line x1="3755.6" y1="1589.4" x2="3780.6" y2="1589.4" stroke="#d0d0d0" stroke-width="2.400"/><line x1="3824.3" y1="1558.6" x2="3862.3" y2="1558.6" stroke="#d0d0d0" stroke-width="2.400"/><line x1="3824.3" y1="1566.3" x2="3862.3" y2="1566.3" stroke="#d0d0d0" stroke-width="2.400"/><line x1="3824.3" y1="1574" x2="3862.3" y2="1574" stroke="#d0d0d0" stroke-width="2.400"/><line x1="3824.3" y1="1581.7" x2="3862.3" y2="1581.7" stroke="#d0d0d0" stroke-width="2.400"/><line x1="3837.2" y1="1589.4" x2="3862.3" y2="1589.4" stroke="#d0d0d0" stroke-width="2.400"/><line x1="3900.5" y1="1558.6" x2="3938.5" y2="1558.6" stroke="#d0d0d0" stroke-width="2.400"/><line x1="3900.5" y1="1566.3" x2="3938.5" y2="1566.3" stroke="#d0d0d0" stroke-width="2.400"/><line x1="3900.5" y1="1574" x2="3938.5" y2="1574" stroke="#d0d0d0" stroke-width="2.400"/><line x1="3900.5" y1="1581.7" x2="3938.5" y2="1581.7" stroke="#d0d0d0" stroke-width="2.400"/><line x1="3900.5" y1="1589.4" x2="3938.5" y2="1589.4" stroke="#d0d0d0" stroke-width="2.400"/><circle cx="3452" cy="1758.6" r="4.400" fill="#d0d0d0"/><path d="M3461 1754.6h24M3461 1762.6h24" stroke="#d0d0d0" stroke-width="2.400"/><path d="M3498.0 1763.5L3507.0 1772.5L3516.0 1763.5" fill="none" stroke="#d0d0d0" stroke-width="3"/>
<path d="M3586.0 1763.5L3595.0 1772.5L3604.0 1763.5" fill="none" stroke="#d0d0d0" stroke-width="3"/>
<text x="3536" y="1765.6" font-size="20" fill="#d0d0d0" font-family="Liberation Sans">1</text><path d="M3549 1754.6h24M3549 1762.6h24" stroke="#d0d0d0" stroke-width="2.400"/><path d="M3916 1930v31M3916 1961h26" stroke="#c8c8c8" stroke-width="2.400" fill="none"/><rect x="3923" y="1940" width="13" height="20" fill="#c8c8c8"/></svg>
<!-- g_color -->
<div class="a" style="left:3302.7px;top:1775.1px;width:608.5px;height:719.9px;background:#535353;border-radius:9px 9px 0 0;box-shadow:0 3px 13px 2px rgba(0,0,0,.36);border:1.5px solid #3a3a3a;box-sizing:border-box;"></div>
<div class="a" style="left:3304.2px;top:1776.6px;width:605.5px;height:30.0px;background:#424242;border-radius:8px 8px 0 0;"></div>
<div class="a" style="left:3304.2px;top:1805.6px;width:605.5px;height:2.0px;background:#383838;"></div>
<div class="a" style="left:3304.2px;top:1807.6px;width:605.5px;height:64.0px;background:#424242;"></div>
<div class="a" style="left:3304.2px;top:1871.1px;width:605.5px;height:2.0px;background:#383838;"></div>
<div class="a" style="left:3304.2px;top:1807.6px;width:124.0px;height:65.5px;background:#535353;"></div>
<div class="a" style="left:3428.0px;top:1807.6px;width:2.0px;height:63.5px;background:#383838;"></div>
<div class="a" style="left:3430.0px;top:1807.6px;width:188.0px;height:63.5px;background:#464646;"></div>
<div class="a" style="left:3618.0px;top:1807.6px;width:2.0px;height:63.5px;background:#383838;"></div>
<div class="t" style="left:3340.0px;top:1825.5px;font-size:26px;color:#ffffff;letter-spacing:-0.30px;font-weight:bold;">Color</div>
<div class="t" style="left:3450.2px;top:1825.5px;font-size:26px;color:#bdbdbd;letter-spacing:-0.13px;font-weight:bold;">Color Guide</div>
<div class="t" style="left:3432.2px;top:1905.8px;font-size:26px;color:#dcdcdc;">R</div>
<div class="t" style="left:3431.0px;top:1987.2px;font-size:26px;color:#dcdcdc;">G</div>
<div class="t" style="left:3432.2px;top:2067.5px;font-size:26px;color:#dcdcdc;">B</div>
<div class="a" style="left:3476.2px;top:1912.7px;width:272.8px;height:10.4px;background:linear-gradient(90deg,#000520,#ff0520);border:1px solid #474747;box-sizing:border-box;"></div>
<div class="a" style="left:3476.2px;top:1994.0px;width:272.8px;height:10.0px;background:linear-gradient(90deg,#ab0020,#abff20);border:1px solid #474747;box-sizing:border-box;"></div>
<div class="a" style="left:3476.2px;top:2074.4px;width:272.8px;height:10.0px;background:linear-gradient(90deg,#ab0500,#ab05ff);border:1px solid #474747;box-sizing:border-box;"></div>
<div class="a" style="left:3769.3px;top:1894.7px;width:85.1px;height:47.3px;background:#454545;border:2px solid #656565;border-radius:5px;box-sizing:border-box;"></div>
<div class="a" style="left:3769.3px;top:1975.0px;width:85.1px;height:48.3px;background:#454545;border:2px solid #656565;border-radius:5px;box-sizing:border-box;"></div>
<div class="a" style="left:3769.3px;top:2055.5px;width:85.1px;height:48.2px;background:#454545;border:2px solid #656565;border-radius:5px;box-sizing:border-box;"></div>
<div class="t" style="left:3782.0px;top:1903.5px;font-size:26px;color:#f2f2f2;letter-spacing:-0.34px;">171</div>
<div class="t" style="left:3782.0px;top:1985.0px;font-size:26px;color:#f2f2f2;">5</div>
<div class="t" style="left:3782.0px;top:2065.0px;font-size:26px;color:#f2f2f2;letter-spacing:-0.42px;">32</div>
<div class="t" style="left:3686.6px;top:2156.4px;font-size:26px;color:#dcdcdc;">#</div>
<div class="a" style="left:3711.2px;top:2146.7px;width:157.4px;height:46.9px;background:#454545;border:2px solid #656565;border-radius:5px;box-sizing:border-box;"></div>
<div class="t" style="left:3724.4px;top:2156.4px;font-size:26px;color:#f2f2f2;letter-spacing:-0.24px;">AB0520</div>
<div class="a" style="left:3319.2px;top:2212.9px;width:548.0px;height:52.1px;background:linear-gradient(180deg,rgba(255,255,255,1) 0%,rgba(255,255,255,0) 50%,rgba(0,0,0,0) 50%,rgba(0,0,0,1) 100%),linear-gradient(90deg,#ff0000 0%,#ffff00 17%,#00ff00 33%,#00ffff 50%,#0000ff 67%,#ff00ff 83%,#ff0000 100%);border:1.5px solid #333;box-sizing:border-box;"></div>
<div class="a" style="left:3304.2px;top:2281.4px;width:605.5px;height:2.5px;background:#383838;"></div>
<div class="a" style="left:3304.2px;top:2284.0px;width:605.5px;height:69.4px;background:#424242;"></div>
<div class="a" style="left:3304.2px;top:2352.0px;width:605.5px;height:2.0px;background:#383838;"></div>
<div class="a" style="left:3304.2px;top:2288.6px;width:226.5px;height:65.4px;background:#535353;"></div>
<div class="a" style="left:3530.6px;top:2288.6px;width:2.0px;height:63.4px;background:#383838;"></div>
<div class="t" style="left:3340.0px;top:2305.4px;font-size:26px;color:#ffffff;letter-spacing:0.15px;font-weight:bold;">Transparency</div>
<div class="a" style="left:3316.9px;top:2371.3px;width:242.1px;height:47.3px;background:#454545;border:2px solid #656565;border-radius:5px;box-sizing:border-box;"></div>
<div class="t" style="left:3333.4px;top:2381.1px;font-size:27px;color:#f2f2f2;letter-spacing:-0.68px;">Normal</div>
<div class="t" style="left:3573.0px;top:2382.0px;font-size:26px;color:#dcdcdc;letter-spacing:0.03px;">Opacity:</div>
<div class="a" style="left:3679.5px;top:2371.3px;width:186.8px;height:47.3px;background:#454545;border:2px solid #656565;border-radius:5px;box-sizing:border-box;"></div>
<div class="a" style="left:3821.8px;top:2373.3px;width:2.0px;height:43.3px;background:#5f5f5f;"></div>
<div class="t" style="left:3689.0px;top:2382.0px;font-size:26px;color:#f2f2f2;letter-spacing:-2.00px;">100%</div>
<div class="a" style="left:3316.0px;top:2435.0px;width:550.0px;height:2.0px;background:#494949;"></div>
<div class="a" style="left:3316.0px;top:2452.0px;width:260.0px;height:40.0px;background:#535353;border:2px solid #494949;border-radius:5px;box-sizing:border-box;"></div>
<div class="a" style="left:3322.6px;top:2463.0px;width:121.9px;height:30.0px;background:#efefef;border:2px solid #2a2a2a;box-sizing:border-box;"></div>
<div class="a" style="left:3516.4px;top:2463.0px;width:120.6px;height:30.0px;background:#535353;border:2px solid #7a7a7a;border-radius:0px;box-sizing:border-box;"></div>
<div class="a" style="left:3655.9px;top:2451.0px;width:206.6px;height:50.0px;background:#535353;border:2px solid #6a6a6a;border-radius:5px;box-sizing:border-box;"></div>
<div class="t" style="left:3693.7px;top:2466.0px;font-size:26px;color:#dcdcdc;letter-spacing:1.41px;">Make Mask</div>
<svg class="a" style="left:0;top:0;" width="4000" height="2475" viewBox="0 0 4000 2475">
<path d="M3315.4 1785.9L3329.8 1800.3M3329.8 1785.9L3315.4 1800.3" stroke="#dadada" stroke-width="2.800"/><path d="M3883.3 1785.7L3877.8 1791.7L3883.3 1797.7" fill="none" stroke="#d0d0d0" stroke-width="2"/>
<path d="M3892.2 1785.7L3886.7 1791.7L3892.2 1797.7" fill="none" stroke="#d0d0d0" stroke-width="2"/>
<line x1="3871" y1="1833.3" x2="3895" y2="1833.3" stroke="#d0d0d0" stroke-width="2.4"/><line x1="3871" y1="1841.0" x2="3895" y2="1841.0" stroke="#d0d0d0" stroke-width="2.4"/><line x1="3871" y1="1848.7" x2="3895" y2="1848.7" stroke="#d0d0d0" stroke-width="2.4"/><line x1="3871" y1="2311.5" x2="3895" y2="2311.5" stroke="#d0d0d0" stroke-width="2.4"/><line x1="3871" y1="2319.2" x2="3895" y2="2319.2" stroke="#d0d0d0" stroke-width="2.4"/><line x1="3871" y1="2326.9" x2="3895" y2="2326.9" stroke="#d0d0d0" stroke-width="2.4"/><path d="M3315.0 1835.5L3321.0 1829.5L3327.0 1835.5" fill="none" stroke="#9a9a9a" stroke-width="1.6"/>
<path d="M3315.0 1840.5L3321.0 1846.5L3327.0 1840.5" fill="none" stroke="#9a9a9a" stroke-width="1.6"/>
<path d="M3315.0 2317.5L3321.0 2311.5L3327.0 2317.5" fill="none" stroke="#9a9a9a" stroke-width="1.6"/>
<path d="M3315.0 2322.5L3321.0 2328.5L3327.0 2322.5" fill="none" stroke="#9a9a9a" stroke-width="1.6"/>
<rect x="3325.500" y="1898" width="17.500" height="17.500" fill="#fff" stroke="#000" stroke-width="3.500"/><rect x="3317.500" y="1890.500" width="17.500" height="17.500" fill="#fff" stroke="#000" stroke-width="3"/><rect x="3315.800" y="1888.800" width="21" height="21" fill="none" stroke="#e0e0e0" stroke-width="1.200"/><path d="M3372 1896h7a7 7 0 0 1 7 7v5" fill="none" stroke="#c8c8c8" stroke-width="4"/><path d="M3366 1896l8 -7.500v15z M3386 1915l-7.500 -8h15z" fill="#c8c8c8"/><rect x="3342" y="1958" width="45.500" height="46" fill="#fff" stroke="#2e2e2e" stroke-width="1.500"/><rect x="3355" y="1971" width="20" height="20" fill="#535353" stroke="#2e2e2e" stroke-width="1.500"/><line x1="3343" y1="2003" x2="3386.500" y2="1959.500" stroke="#e8322a" stroke-width="4"/><rect x="3318" y="1935" width="44" height="44" fill="#9f1f26" stroke="#f4f4f4" stroke-width="2.400"/><rect x="3316" y="1933" width="48" height="48" fill="none" stroke="#3a3a3a" stroke-width="1.400"/><path d="M3660.6 1923.5l10.500 8.500v7a3 3 0 0 1 -3 3h-15a3 3 0 0 1 -3 -3v-7z" fill="#c8c8c8"/><path d="M3481.9 2004.5l10.500 8.500v7a3 3 0 0 1 -3 3h-15a3 3 0 0 1 -3 -3v-7z" fill="#c8c8c8"/><path d="M3510.7 2084.8l10.500 8.500v7a3 3 0 0 1 -3 3h-15a3 3 0 0 1 -3 -3v-7z" fill="#c8c8c8"/><path d="M3343.800 2043.500l12.500 6.500v14.500l-12.500 6.500l-12.500 -6.500v-14.500zM3331.300 2050l12.500 6.500l12.500 -6.500M3343.800 2056.500v14.500" fill="none" stroke="#c8c8c8" stroke-width="2.200"/><rect x="3375.500" y="2039" width="33.500" height="33" fill="#8c1a33" stroke="#e8e8e8" stroke-width="2"/><rect x="3375.500" y="2097" width="33.500" height="34" fill="#a3282a" stroke="#e8e8e8" stroke-width="2"/><path d="M3344.800 2097l18 33h-36z" fill="#c8c8c8"/><path d="M3344.800 2108v12M3344.800 2123.500v3.500" stroke="#535353" stroke-width="4"/><rect x="3317" y="2153.400" width="31.500" height="30.700" fill="#fff"/><line x1="3318" y1="2183" x2="3347.500" y2="2154.500" stroke="#e8322a" stroke-width="3.600"/><rect x="3348.500" y="2153.400" width="31.500" height="30.700" fill="#000"/><rect x="3380" y="2153.400" width="31.400" height="30.700" fill="#fff"/><rect x="3317" y="2153.400" width="94.400" height="30.700" fill="none" stroke="#3a3a3a" stroke-width="1.600"/><path d="M3526.3 2391.2L3535.8 2400.7L3545.3 2391.2" fill="none" stroke="#e6e6e6" stroke-width="3"/>
<path d="M3838.2 2386.4L3847.8 2395.9L3838.2 2405.4" fill="none" stroke="#e6e6e6" stroke-width="3"/>
</svg>
<!-- g_drop -->
<div class="a" style="left:1668.9px;top:153.6px;width:1213.3px;height:557.2px;background:#535353;box-shadow:0 4px 14px 1px rgba(0,0,0,.32);"></div>
<div class="a" style="left:1668.9px;top:237.4px;width:137.6px;height:4.8px;background:#3b8ce0;"></div>
<div class="t" style="left:1694.0px;top:184.0px;font-size:30.5px;color:#e6e6e6;letter-spacing:-0.12px;">Fonts</div>
<div class="t" style="left:1830.3px;top:184.0px;font-size:30.5px;color:#e6e6e6;letter-spacing:0.46px;">Find More</div>
<div class="t" style="left:1682.7px;top:273.5px;font-size:30px;color:#dcdcdc;letter-spacing:0.43px;">Filters:</div>
<div class="t" style="left:2305.0px;top:275.0px;font-size:28px;color:#f2f2f2;letter-spacing:0.98px;font-weight:bold;">Selected Text</div>
<div class="a" style="left:2287.8px;top:313.4px;width:356.7px;height:2.0px;background:#c4c4c4;"></div>
<div class="t" style="left:2678.5px;top:279.4px;font-size:22px;color:#cfcfcf;">A</div>
<div class="a" style="left:2730.3px;top:261.5px;width:54.0px;height:54.0px;background:#2d2d2d;border-radius:5px;"></div>
<div class="t" style="left:2745.8px;top:273.2px;font-size:34px;color:#f2f2f2;">A</div>
<div class="t" style="left:2812.5px;top:265.9px;font-size:46px;color:#dedede;">A</div>
<div class="a" style="left:1671.5px;top:331.7px;width:1209.5px;height:379.0px;background:#ffffff;border-radius:5px 0 0 0;"></div>
<div class="a" style="left:1671.5px;top:409.7px;width:1209.5px;height:64.2px;background:#dedede;"></div>
<div class="t" style="left:1728.6px;top:355.6px;font-size:30.5px;color:#0a0a0a;letter-spacing:0.52px;">Proxima Nova Thin</div>
<div class="t" style="left:1728.6px;top:431.6px;font-size:30.5px;color:#0a0a0a;letter-spacing:0.32px;">Proxima Nova</div>
<div class="t" style="left:1728.6px;top:507.5px;font-size:30.5px;color:#0a0a0a;letter-spacing:0.25px;">Proxima Nova Bold</div>
<div class="t" style="left:1728.6px;top:583.0px;font-size:30.5px;color:#0a0a0a;letter-spacing:0.18px;">Proxima Nova Black</div>
<div class="t" style="left:1728.6px;top:658.9px;font-size:30.5px;color:#0a0a0a;letter-spacing:0.37px;">Proxima Nova Cond Bold</div>
<div class="t" style="left:2320.8px;top:347.6px;font-size:46px;color:#1a1a1a;letter-spacing:-2.64px;-webkit-text-stroke:1.6px #fff;">STUDENTS</div>
<div class="t" style="left:2320.8px;top:423.6px;font-size:46px;color:#111;letter-spacing:-1.60px;">STUDENTS</div>
<div class="t" style="left:2322.0px;top:500.3px;font-size:45px;color:#000;letter-spacing:0.14px;font-weight:bold;-webkit-text-stroke:0.8px #000;">STUDENTS</div>
<div class="t" style="left:2322.0px;top:575.9px;font-size:45px;color:#000;letter-spacing:1.04px;font-weight:bold;-webkit-text-stroke:2.4px #000;">STUDENTS</div>
<div class="t" style="left:2322.0px;top:650.9px;font-size:46px;color:#000;font-weight:bold;-webkit-text-stroke:0.6px #000;transform-origin:0 0;transform:scaleX(0.80);">STUDENTS</div>
<svg class="a" style="left:0;top:0;" width="4000" height="2475" viewBox="0 0 4000 2475">
<path d="M1795.400 271h31.400l-11.500 14.500v14l-8.400 5v-19z" fill="#c8c8c8"/><path d="M1830.1 285.3L1839.1 294.3L1848.1 285.3" fill="none" stroke="#c8c8c8" stroke-width="2.6"/>
<polygon points="1900.1,269.5 1904.9,281.9 1918.2,282.6 1907.9,291.0 1911.3,303.9 1900.1,296.7 1888.9,303.9 1892.3,291.0 1882.0,282.6 1895.3,281.9" fill="#c8c8c8"/><circle cx="1970.800" cy="287.700" r="17.600" fill="none" stroke="#c8c8c8" stroke-width="2.600"/><path d="M1970.800 275v13.500l6.500 7" fill="none" stroke="#c8c8c8" stroke-width="3.200"/><g transform="translate(2042 288.5) scale(1.0)"><path d="M1 11.500H-12a8.500 8.500 0 0 1 -2 -16.700a11 11 0 0 1 21 -4a8 8 0 0 1 9.500 6.500" fill="none" stroke="#c8c8c8" stroke-width="2.6" stroke-linecap="round"/><path d="M-3.500 3L5 15.500L20 -5" fill="none" stroke="#c8c8c8" stroke-width="3.51"/></g><path d="M2611.5 281.9L2621.0 291.4L2630.5 281.9" fill="none" stroke="#e6e6e6" stroke-width="2.8"/>
<path d="M2716.500 442.9q7 -9 14 -2.500t14 -2.500" fill="none" stroke="#4a4a4a" stroke-width="3.600"/><path d="M2716.500 454.9q7 -9 14 -2.500t14 -2.500" fill="none" stroke="#4a4a4a" stroke-width="3.600"/><g transform="translate(2850 369.4) scale(0.86)"><path d="M1 11.500H-12a8.500 8.500 0 0 1 -2 -16.700a11 11 0 0 1 21 -4a8 8 0 0 1 9.500 6.500" fill="none" stroke="#606060" stroke-width="3" stroke-linecap="round"/><path d="M-3.500 3L5 15.500L20 -5" fill="none" stroke="#606060" stroke-width="4.05"/></g><g transform="translate(2850 445.4) scale(0.86)"><path d="M1 11.500H-12a8.500 8.500 0 0 1 -2 -16.700a11 11 0 0 1 21 -4a8 8 0 0 1 9.500 6.500" fill="none" stroke="#606060" stroke-width="3" stroke-linecap="round"/><path d="M-3.500 3L5 15.500L20 -5" fill="none" stroke="#606060" stroke-width="4.05"/></g><g transform="translate(2850 521.3) scale(0.86)"><path d="M1 11.500H-12a8.500 8.500 0 0 1 -2 -16.700a11 11 0 0 1 21 -4a8 8 0 0 1 9.500 6.500" fill="none" stroke="#606060" stroke-width="3" stroke-linecap="round"/><path d="M-3.500 3L5 15.500L20 -5" fill="none" stroke="#606060" stroke-width="4.05"/></g><g transform="translate(2850 597.2) scale(0.86)"><path d="M1 11.500H-12a8.500 8.500 0 0 1 -2 -16.700a11 11 0 0 1 21 -4a8 8 0 0 1 9.500 6.500" fill="none" stroke="#606060" stroke-width="3" stroke-linecap="round"/><path d="M-3.500 3L5 15.500L20 -5" fill="none" stroke="#606060" stroke-width="4.05"/></g><g transform="translate(2850 673.2) scale(0.86)"><path d="M1 11.500H-12a8.500 8.500 0 0 1 -2 -16.700a11 11 0 0 1 21 -4a8 8 0 0 1 9.500 6.500" fill="none" stroke="#606060" stroke-width="3" stroke-linecap="round"/><path d="M-3.500 3L5 15.500L20 -5" fill="none" stroke="#606060" stroke-width="4.05"/></g></svg>
<!-- g_annot -->
<svg class="a" style="left:0;top:0;" width="4000" height="2475" viewBox="0 0 4000 2475">
<rect x="32.600" y="617.700" width="69.300" height="54.100" fill="none" stroke="#ff00ff" stroke-width="5"/><path d="M104.300 644.300H522A109 109 0 0 1 631.200 753.400V1223.700A110 110 0 0 0 741.200 1333.600H780" fill="none" stroke="#ff00ff" stroke-width="5.100"/><path d="M817 1333.600L767.400 1313.300L777.300 1333.600L767.400 1354.300Z" fill="#ff00ff"/><rect x="1658.650" y="105.950" width="446.600" height="45.200" fill="none" stroke="#ff00ff" stroke-width="5.300"/><path d="M2107 120.500H2156A78 78 0 0 1 2234 198.500V370" fill="none" stroke="#ff00ff" stroke-width="5.300"/><path d="M2234.100 402.900L2213.600 353.400L2234.100 365.200L2255 353.400Z" fill="#ff00ff"/><rect x="1667.800" y="406.600" width="1211.500" height="70.100" fill="none" stroke="#ff00ff" stroke-width="5.800"/><rect x="3424.300" y="739.700" width="142.600" height="50.900" fill="none" stroke="#ff00ff" stroke-width="5"/></svg>
<div class="t" style="left:572.5px;top:865.4px;font-size:58px;color:#ff00ff;font-weight:bold;transform-origin:0 0;transform:scaleX(1.12);">A</div>
<div class="t" style="left:2150.2px;top:163.0px;font-size:59.5px;color:#ff00ff;font-weight:bold;transform-origin:0 0;transform:scaleX(0.92);">B</div>
<div class="t" style="left:3586.5px;top:739.1px;font-size:59px;color:#ff00ff;font-weight:bold;transform-origin:0 0;transform:scaleX(1.08);">C</div>
<div class="a" style="left:0.0px;top:0.0px;width:3.6px;height:2475.0px;background:#f6f6f6;"></div>
<div class="a" style="left:3.6px;top:3.0px;width:1.2px;height:2472.0px;background:#333;"></div>
<div class="a" style="left:4.0px;top:2415.0px;width:3996.0px;height:60.0px;background:linear-gradient(180deg,rgba(0,0,0,0),rgba(0,0,0,0.07));"></div>
</body></html>
